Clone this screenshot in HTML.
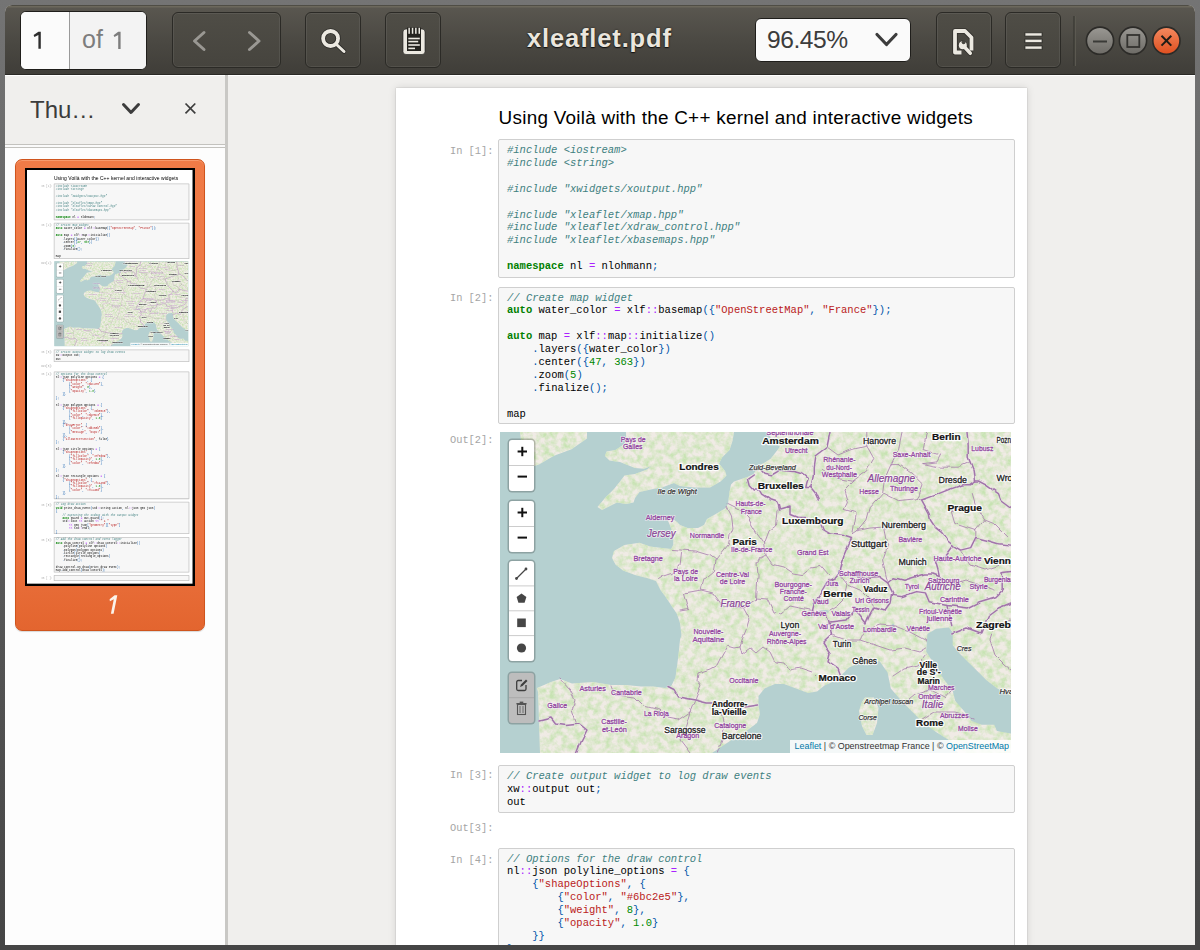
<!DOCTYPE html>
<html><head><meta charset="utf-8"><style>
*{margin:0;padding:0;box-sizing:border-box}
html,body{width:1200px;height:950px;overflow:hidden;background:#5a5a5a;font-family:"Liberation Sans",sans-serif}
.abs{position:absolute}
#desk{position:absolute;left:0;top:0;width:1200px;height:950px;background:linear-gradient(180deg,#747474 0%,#5c5c5c 50%,#454545 100%)}
#win{position:absolute;left:5px;top:5px;width:1190px;height:940px;background:#f0efed;border-radius:7px 7px 0 0;overflow:hidden}
#hdr{position:absolute;left:0;top:0;width:1190px;height:70px;background:linear-gradient(180deg,#5a5750 0%,#4b4943 50%,#3f3d38 100%);border-top:1px solid #4f4d45;box-shadow:inset 0 1.5px 0 #6c685c}
#hdr:after{content:"";position:absolute;left:0;right:0;bottom:0;height:1px;background:#2a2925}
.btn{position:absolute;border:1px solid #2b2a26;border-radius:6px;background:linear-gradient(180deg,#4f4d46,#46443e);box-shadow:inset 0 0 0 1px rgba(255,255,255,0.07)}
.entry{position:absolute;background:#fafafa;border:1px solid #1f1e1b;border-radius:6px}
#side{position:absolute;left:0;top:70px;width:220px;height:870px;background:#f0efed;border-top:1px solid #fff}
#thumbs{position:absolute;left:0;top:143px;width:220px;height:797px;background:#fdfdfd}
#divider{position:absolute;left:220px;top:70px;width:3px;height:870px;background:#c9c8c5}
#content{position:absolute;left:223px;top:70px;width:967px;height:870px;background:#f0efed;border-top:1px solid #fff}
.pg{position:absolute;width:631px;height:1569px;background:#fff}
#page{left:391px;top:83px;box-shadow:0 0 1px rgba(0,0,0,0.3),0 0 8px rgba(0,0,0,0.12)}
#thumb{left:21.75px;top:164.7px;height:1561px;overflow:hidden;transform:scale(0.2623,0.265);transform-origin:0 0}
#thumb .code{border:3.8px solid #c4c4c4}
#thumb use{--po:0.4}
#thumb pre{left:5px;top:1px}
.ttl{left:102.6px;top:19px;font-size:18.9px;letter-spacing:0.262px;color:#000;white-space:nowrap}
.code{position:absolute;left:102px;width:517px;background:#f7f7f7;border:1px solid #cfcfcf;border-radius:2px}
pre{position:absolute;left:8px;top:4px;font-family:"Liberation Mono",monospace;font-size:10.5px;line-height:12.9px;color:#000;white-space:pre}
.prompt{position:absolute;left:54px;font-family:"Liberation Mono",monospace;font-size:10.35px;margin-top:1.5px;color:#a5a5a5;white-space:pre}
.c{color:#408080;font-style:italic}
.k{color:#008000;font-weight:bold}
.o{color:#aa22ff}
.s{color:#ba2121}
.n{color:#008800}
.p{color:#0055aa}
.map{position:absolute;left:104px;top:344px;width:511px;height:321px;overflow:hidden;background:#b5d0d0}
.lbar{position:absolute;left:9.3px;width:25.2px;background:#fff;border-radius:3px;box-shadow:0 0 0 1.5px rgba(0,0,0,0.22)}
.zp,.zm{position:absolute;left:0;width:25px;height:25px;text-align:center;font:bold 16px/25px "Liberation Sans",sans-serif;color:#000}
.zp{top:0}.zm{top:25.5px}
.zsep{position:absolute;left:0;top:25px;width:25px;height:1px;background:#ccc}
.attr{position:absolute;left:290px;top:308.4px;width:221px;height:12.9px;background:rgba(255,255,255,0.85);font-size:8.95px;line-height:12.9px;color:#333;padding-left:4.5px;white-space:nowrap}
</style></head><body>
<svg width="0" height="0" style="position:absolute"><defs>
<filter id="tex" x="0" y="0" width="1" height="1" color-interpolation-filters="sRGB"><feTurbulence type="fractalNoise" baseFrequency="0.16" numOctaves="3" seed="7" result="n"/><feColorMatrix in="n" type="matrix" values="0 0 0 0 0.78  0 0 0 0 0.89  0 0 0 0 0.70  2.2 0 0 0 -0.75" result="g"/><feComposite in="g" in2="SourceGraphic" operator="in" result="gc"/><feMerge><feMergeNode in="SourceGraphic"/><feMergeNode in="gc"/></feMerge></filter>
<filter id="wig" x="-5%" y="-5%" width="110%" height="110%"><feTurbulence type="fractalNoise" baseFrequency="0.1" numOctaves="1" seed="3" result="t"/><feDisplacementMap in="SourceGraphic" in2="t" scale="4.5" xChannelSelector="R" yChannelSelector="G"/></filter>
<clipPath id="mclip"><rect x="0" y="0" width="511" height="321"/></clipPath>
<symbol id="mapsym" viewBox="0 0 511 321">
<g clip-path="url(#mclip)">
<rect x="0" y="0" width="511" height="321" fill="#b5d0d0"/>
<g filter="url(#tex)">
<g fill="#f0ebe5">
<polygon points="266.7,0.0 511.0,0.0 511.0,321.0 40.0,321.0 39.0,288.0 38.0,260.0 37.0,256.0 51.0,250.0 60.0,247.0 72.0,251.5 93.0,250.0 111.0,253.0 126.0,253.0 141.0,254.5 153.0,254.5 165.0,256.0 171.0,254.5 175.5,245.5 178.5,223.0 180.0,208.0 181.5,203.0 180.0,191.0 177.0,182.0 171.0,173.0 165.0,164.0 160.5,158.0 156.0,149.0 147.0,146.0 135.0,143.0 123.0,138.5 115.5,132.5 112.0,126.0 114.0,119.0 124.5,113.0 139.5,110.8 150.0,114.5 162.0,116.0 171.2,117.0 173.3,112.7 173.3,101.8 169.0,91.0 166.9,86.7 173.0,87.0 177.0,90.0 180.0,93.0 187.5,96.0 198.0,96.0 204.0,93.0 207.0,87.0 217.5,81.0 225.0,76.5 228.0,72.0 229.5,60.0 231.0,52.5 234.0,49.5 247.5,45.0 253.5,42.0 259.5,33.0 264.0,31.0 270.7,26.7 280.0,14.7 274.7,10.7"/>
<polygon points="126.0,0.0 234.0,0.0 232.5,9.0 229.5,18.0 222.0,25.5 219.0,31.5 225.0,39.0 226.5,43.5 220.5,49.5 210.0,55.5 195.0,55.5 180.0,54.0 174.0,51.0 162.0,55.5 153.0,57.0 139.5,60.0 135.0,66.0 133.5,70.5 126.0,72.0 117.0,70.5 108.0,75.0 102.0,78.0 97.5,75.0 105.0,66.0 114.0,57.0 120.0,49.5 124.5,43.5 135.0,42.0 147.0,37.5 151.5,34.0 144.0,36.8 135.0,36.0 127.5,33.0 120.0,30.0 109.5,28.5 105.0,24.0 106.5,19.5 115.5,18.0 124.5,12.0 126.0,4.5"/>
<polygon points="20.0,0.0 87.0,0.0 87.0,6.5 71.5,17.3 54.0,23.8 39.0,32.5 34.0,34.0 28.0,28.0 21.0,8.0"/>
</g>
<polygon fill="#f0ebe5" points="365.0,265.5 374.0,265.5 378.5,276.0 377.0,291.0 372.5,303.0 366.5,303.0 362.0,294.0 359.0,279.0 362.0,270.0"/>
</g>
<g fill="#b5d0d0"><polygon points="212.0,321.0 230.0,309.0 245.0,300.0 257.0,291.0 260.0,282.0 258.5,273.0 258.5,264.0 264.5,256.5 275.0,252.0 284.0,252.0 296.0,256.5 308.0,261.0 317.0,259.5 324.5,253.5 336.0,248.5 349.0,235.6 360.0,230.8 379.6,229.2 387.6,240.5 390.8,256.6 400.5,267.8 410.0,277.5 423.0,290.4 436.0,300.0 448.8,308.0 458.0,321.0"/><polygon points="427.4,201.9 436.3,196.8 448.9,195.6 452.7,200.6 452.7,213.3 460.0,222.0 467.8,229.7 476.7,238.5 486.8,248.6 496.9,256.2 511.0,263.8 511.0,301.6 496.9,299.1 494.3,292.8 481.7,292.8 471.6,289.0 464.0,278.9 455.2,268.8 452.7,258.7 443.8,247.3 434.0,232.0 426.2,219.6"/></g>
<g fill="#b5d0d0"><ellipse cx="322" cy="180.5" rx="7" ry="2.2" transform="rotate(-12 322 180.5)"/><ellipse cx="366" cy="147" rx="4" ry="1.6"/><ellipse cx="393" cy="195" rx="1.5" ry="3.5"/></g>
<g filter="url(#tex)">
<polygon fill="#f0ebe5" points="365.0,265.5 374.0,265.5 378.5,276.0 377.0,291.0 372.5,303.0 366.5,303.0 362.0,294.0 359.0,279.0 362.0,270.0"/>
</g>
<g fill="none" stroke-linejoin="round" stroke-linecap="round" filter="url(#wig)">
<polyline points="366.8,0.0 366.8,14.0 373.8,26.4 366.8,38.7 352.7,49.2 344.0,58.0 347.5,70.3 344.0,77.4 356.3,80.9 352.7,102.0" stroke="#a77dae" stroke-width="1.0" stroke-opacity="0.8"/>
<polyline points="384.4,47.5 382.6,61.5 370.3,75.6 366.8,88.0 358.0,98.4 352.7,102.0" stroke="#a77dae" stroke-width="1.0" stroke-opacity="0.8"/>
<polyline points="384.4,61.5 398.4,68.6 416.0,66.8 421.6,67.9" stroke="#a77dae" stroke-width="1.0" stroke-opacity="0.8"/>
<polyline points="398.4,31.6 412.5,42.2 423.0,52.7 419.5,61.5 416.0,66.8" stroke="#a77dae" stroke-width="1.0" stroke-opacity="0.8"/>
<polyline points="423.0,31.6 440.6,35.2 458.2,35.2 470.5,29.9" stroke="#a77dae" stroke-width="1.0" stroke-opacity="0.8"/>
<polyline points="402.0,0.0 398.4,17.6 391.4,31.6 398.4,31.6" stroke="#a77dae" stroke-width="1.0" stroke-opacity="0.8"/>
<polyline points="426.6,0.0 423.0,17.6 440.6,22.9 437.0,29.9 423.0,31.6" stroke="#a77dae" stroke-width="1.0" stroke-opacity="0.8"/>
<polyline points="358.0,98.4 370.0,96.0 384.4,95.0 388.0,112.5 382.6,128.0 387.7,150.8" stroke="#a77dae" stroke-width="1.0" stroke-opacity="0.8"/>
<polyline points="451.2,79.0 475.8,73.8 484.6,87.9 475.8,98.4 454.7,91.4 451.2,79.0" stroke="#a77dae" stroke-width="1.0" stroke-opacity="0.8"/>
<polyline points="472.3,61.5 475.8,73.8" stroke="#a77dae" stroke-width="1.0" stroke-opacity="0.8"/>
<polyline points="475.8,98.4 475.8,109.0" stroke="#a77dae" stroke-width="1.0" stroke-opacity="0.8"/>
<polyline points="484.6,87.9 493.4,91.4 507.4,105.5" stroke="#a77dae" stroke-width="1.0" stroke-opacity="0.8"/>
<polyline points="366.8,14.0 350.0,18.0 338.0,23.0 327.0,15.0" stroke="#a77dae" stroke-width="1.0" stroke-opacity="0.8"/>
<polyline points="352.7,49.2 335.0,46.0 322.5,37.5" stroke="#a77dae" stroke-width="1.0" stroke-opacity="0.8"/>
<polyline points="384.4,47.5 391.4,31.6" stroke="#a77dae" stroke-width="1.0" stroke-opacity="0.8"/>
<polyline points="227.0,75.0 231.5,84.0 233.0,96.0 230.0,103.5 228.5,112.5 216.0,128.0" stroke="#a77dae" stroke-width="1.0" stroke-opacity="0.8"/>
<polyline points="278.0,78.0 276.5,93.0 269.0,99.0 264.5,111.0 266.0,123.0 260.0,126.0 257.0,132.0 258.0,143.0 256.5,167.0" stroke="#a77dae" stroke-width="1.0" stroke-opacity="0.8"/>
<polyline points="266.0,123.0 272.0,132.0 284.0,135.0 293.0,141.0 302.0,142.5 311.0,135.0 320.0,133.5 329.0,144.0" stroke="#a77dae" stroke-width="1.0" stroke-opacity="0.8"/>
<polyline points="172.5,117.5 195.0,119.0 210.0,123.5 216.0,128.0 214.5,138.5 204.0,147.5 201.0,158.0 184.5,161.0 189.0,177.5 180.0,179.0" stroke="#a77dae" stroke-width="1.0" stroke-opacity="0.8"/>
<polyline points="181.5,120.5 180.0,134.0 171.0,141.5 162.0,144.5 157.5,147.5" stroke="#a77dae" stroke-width="1.0" stroke-opacity="0.8"/>
<polyline points="201.0,158.0 213.0,161.0 222.0,173.0 243.0,176.0 256.5,167.0" stroke="#a77dae" stroke-width="1.0" stroke-opacity="0.8"/>
<polyline points="243.0,177.0 249.0,188.0 246.0,198.0 242.0,208.0 240.0,214.0 235.0,215.0 228.0,213.0 220.0,227.0 217.0,233.0 210.0,237.0 198.0,241.0 197.0,248.0 201.0,253.0 195.0,268.0" stroke="#a77dae" stroke-width="1.0" stroke-opacity="0.8"/>
<polyline points="240.0,214.0 242.0,222.0 250.0,216.0 256.0,221.0 263.0,215.0 270.0,220.0 275.0,230.0 285.0,231.0 290.0,238.0 300.0,236.0 312.0,240.0 320.0,248.0" stroke="#a77dae" stroke-width="1.0" stroke-opacity="0.8"/>
<polyline points="256.5,167.0 268.0,168.0 274.0,181.0 281.0,182.0 290.0,174.0 300.0,176.0 312.5,178.5" stroke="#a77dae" stroke-width="1.0" stroke-opacity="0.8"/>
<polyline points="228.0,72.0 240.0,78.0 248.0,86.0 255.0,98.0 264.5,111.0" stroke="#a77dae" stroke-width="1.0" stroke-opacity="0.8"/>
<polyline points="60.0,247.0 70.0,258.0 75.0,268.0 72.0,278.0 76.0,290.0" stroke="#a77dae" stroke-width="1.0" stroke-opacity="0.8"/>
<polyline points="111.0,253.0 115.0,263.0 135.0,265.0 144.0,274.0 160.0,278.0 168.0,286.0 178.0,288.0 190.0,280.0 195.0,268.0" stroke="#a77dae" stroke-width="1.0" stroke-opacity="0.8"/>
<polyline points="190.0,280.0 186.0,293.0 180.0,308.0 190.0,321.0" stroke="#a77dae" stroke-width="1.0" stroke-opacity="0.8"/>
<polyline points="220.0,273.0 225.0,293.0 222.0,308.0 217.0,321.0" stroke="#a77dae" stroke-width="1.0" stroke-opacity="0.8"/>
<polyline points="339.0,141.5 348.0,153.0 345.0,166.0 338.0,173.0 330.0,178.0" stroke="#a77dae" stroke-width="1.0" stroke-opacity="0.8"/>
<polyline points="348.0,153.0 360.0,158.0 368.0,166.0 374.0,175.0" stroke="#a77dae" stroke-width="1.0" stroke-opacity="0.8"/>
<polyline points="393.0,244.0 405.0,236.0 418.0,233.0 426.0,223.0" stroke="#a77dae" stroke-width="1.0" stroke-opacity="0.8"/>
<polyline points="404.2,272.0 415.0,263.0 430.0,258.0 445.0,266.0 451.8,258.0" stroke="#a77dae" stroke-width="1.0" stroke-opacity="0.8"/>
<polyline points="421.0,288.8 435.0,280.0 455.0,280.0 474.2,286.0" stroke="#a77dae" stroke-width="1.0" stroke-opacity="0.8"/>
<polyline points="360.0,208.0 375.0,213.0 390.0,218.0 405.0,216.0 420.0,220.0 426.6,216.0" stroke="#a77dae" stroke-width="1.0" stroke-opacity="0.8"/>
<polyline points="331.5,203.0 345.0,208.0 360.0,208.0 365.0,198.0 380.0,193.0 395.0,194.0 410.0,200.0 426.6,209.0" stroke="#a77dae" stroke-width="1.0" stroke-opacity="0.8"/>
<polyline points="511.0,188.0 495.0,193.0 490.0,208.0 495.0,223.0 505.0,233.0 511.0,238.0" stroke="#a77dae" stroke-width="1.0" stroke-opacity="0.8"/>
<polyline points="460.0,118.0 470.0,133.0 485.0,138.0 500.0,133.0" stroke="#a77dae" stroke-width="1.0" stroke-opacity="0.8"/>
<polyline points="439.3,144.5 450.0,153.0 465.0,148.0 480.0,153.0 495.0,158.0" stroke="#a77dae" stroke-width="1.0" stroke-opacity="0.8"/>
<polyline points="253.3,43.0 247.5,47.2 249.2,53.8 253.3,58.0 259.2,58.0 261.7,62.2 269.2,67.2 276.7,69.7 278.3,73.0 279.5,78.0 290.0,75.0 290.0,82.5 297.5,85.5 308.0,85.5 320.0,90.0 323.0,97.5 330.5,102.0 342.5,103.5 351.5,106.5 348.5,112.5 344.0,123.0 341.0,132.0 338.8,141.0 335.0,145.5 329.0,148.5 324.5,156.0 320.0,163.5 314.0,172.5 312.5,178.5 315.5,183.0 321.0,180.0 325.5,182.0 328.5,188.0 330.0,194.0 331.5,203.0 323.0,211.0 330.0,222.0 328.0,230.0 338.0,237.0 342.0,248.0" stroke="#e6dbe6" stroke-width="2.6" stroke-opacity="0.6"/>
<polyline points="168.0,254.5 174.0,257.5 178.5,265.0 186.0,266.5 195.0,268.0 207.0,271.0 216.0,271.0 230.0,273.0 245.0,275.0 258.5,273.0" stroke="#e6dbe6" stroke-width="2.6" stroke-opacity="0.6"/>
<polyline points="39.0,289.0 51.0,286.0 55.5,292.0 66.0,293.5 79.5,292.0 87.0,298.0 81.0,310.0 76.5,321.0" stroke="#e6dbe6" stroke-width="2.6" stroke-opacity="0.6"/>
<polyline points="330.0,0.0 327.0,15.0 315.0,24.0 313.3,35.5 313.3,43.8 310.8,55.5" stroke="#e6dbe6" stroke-width="2.6" stroke-opacity="0.6"/>
<polyline points="261.7,38.8 264.0,41.3 271.7,43.0 277.5,39.7 279.0,38.0 295.0,39.7 303.3,42.2 308.3,46.3 306.7,51.3 305.8,55.5 310.8,55.5 315.0,60.5 318.3,68.0" stroke="#e6dbe6" stroke-width="2.6" stroke-opacity="0.6"/>
<polyline points="467.0,0.0 468.2,12.6 468.2,25.2 473.2,37.7 474.5,49.0 478.3,49.0 485.8,52.8 498.4,61.6 500.9,68.0 511.0,75.5" stroke="#e6dbe6" stroke-width="2.6" stroke-opacity="0.6"/>
<polyline points="474.5,49.0 469.4,52.8 463.0,52.8 448.0,57.9 435.5,62.9 421.6,67.9 429.2,81.8 430.4,88.0 435.5,95.6 441.8,100.6 448.0,109.3 454.4,114.4 460.6,118.1 470.7,115.6 475.7,105.5 485.8,108.0 498.4,111.8 511.0,113.1" stroke="#e6dbe6" stroke-width="2.6" stroke-opacity="0.6"/>
<polyline points="453.0,113.0 445.5,123.2 435.5,129.5 438.0,138.3 439.3,144.5 433.0,142.0 425.4,142.0 416.6,144.5 404.0,148.3 394.0,145.8 387.7,150.8 378.9,144.5 365.0,145.5 351.5,144.0 338.8,141.0" stroke="#e6dbe6" stroke-width="2.6" stroke-opacity="0.6"/>
<polyline points="387.7,150.8 392.7,160.9 391.5,163.4 401.5,164.7 416.6,159.6 425.4,160.9 429.2,169.7 448.0,173.5 467.0,176.0 479.5,169.7 495.9,164.7 502.2,158.4 502.2,148.3 501.0,140.8 511.0,139.5" stroke="#e6dbe6" stroke-width="2.6" stroke-opacity="0.6"/>
<polyline points="391.5,163.4 390.0,171.0 385.0,178.0 374.0,175.0 370.0,182.0 366.0,192.0 360.0,184.0 354.0,178.0 346.0,188.0 330.0,190.0" stroke="#e6dbe6" stroke-width="2.6" stroke-opacity="0.6"/>
<polyline points="448.0,173.5 450.6,188.6 451.8,193.6" stroke="#e6dbe6" stroke-width="2.6" stroke-opacity="0.6"/>
<polyline points="451.8,202.0 467.0,196.0 480.8,201.0 488.3,183.5 498.4,176.0 511.0,171.0" stroke="#e6dbe6" stroke-width="2.6" stroke-opacity="0.6"/>
<polyline points="253.3,43.0 247.5,47.2 249.2,53.8 253.3,58.0 259.2,58.0 261.7,62.2 269.2,67.2 276.7,69.7 278.3,73.0 279.5,78.0 290.0,75.0 290.0,82.5 297.5,85.5 308.0,85.5 320.0,90.0 323.0,97.5 330.5,102.0 342.5,103.5 351.5,106.5 348.5,112.5 344.0,123.0 341.0,132.0 338.8,141.0 335.0,145.5 329.0,148.5 324.5,156.0 320.0,163.5 314.0,172.5 312.5,178.5 315.5,183.0 321.0,180.0 325.5,182.0 328.5,188.0 330.0,194.0 331.5,203.0 323.0,211.0 330.0,222.0 328.0,230.0 338.0,237.0 342.0,248.0" stroke="#a174aa" stroke-width="1.45"/>
<polyline points="168.0,254.5 174.0,257.5 178.5,265.0 186.0,266.5 195.0,268.0 207.0,271.0 216.0,271.0 230.0,273.0 245.0,275.0 258.5,273.0" stroke="#a174aa" stroke-width="1.45"/>
<polyline points="39.0,289.0 51.0,286.0 55.5,292.0 66.0,293.5 79.5,292.0 87.0,298.0 81.0,310.0 76.5,321.0" stroke="#a174aa" stroke-width="1.45"/>
<polyline points="330.0,0.0 327.0,15.0 315.0,24.0 313.3,35.5 313.3,43.8 310.8,55.5" stroke="#a174aa" stroke-width="1.45"/>
<polyline points="261.7,38.8 264.0,41.3 271.7,43.0 277.5,39.7 279.0,38.0 295.0,39.7 303.3,42.2 308.3,46.3 306.7,51.3 305.8,55.5 310.8,55.5 315.0,60.5 318.3,68.0" stroke="#a174aa" stroke-width="1.45"/>
<polyline points="467.0,0.0 468.2,12.6 468.2,25.2 473.2,37.7 474.5,49.0 478.3,49.0 485.8,52.8 498.4,61.6 500.9,68.0 511.0,75.5" stroke="#a174aa" stroke-width="1.45"/>
<polyline points="474.5,49.0 469.4,52.8 463.0,52.8 448.0,57.9 435.5,62.9 421.6,67.9 429.2,81.8 430.4,88.0 435.5,95.6 441.8,100.6 448.0,109.3 454.4,114.4 460.6,118.1 470.7,115.6 475.7,105.5 485.8,108.0 498.4,111.8 511.0,113.1" stroke="#a174aa" stroke-width="1.45"/>
<polyline points="453.0,113.0 445.5,123.2 435.5,129.5 438.0,138.3 439.3,144.5 433.0,142.0 425.4,142.0 416.6,144.5 404.0,148.3 394.0,145.8 387.7,150.8 378.9,144.5 365.0,145.5 351.5,144.0 338.8,141.0" stroke="#a174aa" stroke-width="1.45"/>
<polyline points="387.7,150.8 392.7,160.9 391.5,163.4 401.5,164.7 416.6,159.6 425.4,160.9 429.2,169.7 448.0,173.5 467.0,176.0 479.5,169.7 495.9,164.7 502.2,158.4 502.2,148.3 501.0,140.8 511.0,139.5" stroke="#a174aa" stroke-width="1.45"/>
<polyline points="391.5,163.4 390.0,171.0 385.0,178.0 374.0,175.0 370.0,182.0 366.0,192.0 360.0,184.0 354.0,178.0 346.0,188.0 330.0,190.0" stroke="#a174aa" stroke-width="1.45"/>
<polyline points="448.0,173.5 450.6,188.6 451.8,193.6" stroke="#a174aa" stroke-width="1.45"/>
<polyline points="451.8,202.0 467.0,196.0 480.8,201.0 488.3,183.5 498.4,176.0 511.0,171.0" stroke="#a174aa" stroke-width="1.45"/>
</g>
<g font-family="Liberation Sans" stroke-linejoin="round">
<text x="266.3" y="3.3" textLength="47.2" lengthAdjust="spacingAndGlyphs" font-size="7.8"  fill="#fff" stroke="#fff" stroke-width="1.8" stroke-opacity="0.7" fill-opacity="0.7" style="opacity:var(--po,1)">Septentrionale</text>
<text x="120.8" y="10.2" textLength="24.7" lengthAdjust="spacingAndGlyphs" font-size="7.8"  fill="#fff" stroke="#fff" stroke-width="1.8" stroke-opacity="0.7" fill-opacity="0.7" style="opacity:var(--po,1)">Pays de</text>
<text x="123.0" y="16.8" textLength="19.5" lengthAdjust="spacingAndGlyphs" font-size="7.8"  fill="#fff" stroke="#fff" stroke-width="1.8" stroke-opacity="0.7" fill-opacity="0.7" style="opacity:var(--po,1)">Galles</text>
<text x="262.2" y="12.0" textLength="56.6" lengthAdjust="spacingAndGlyphs" font-size="9.0" font-weight="bold" fill="#fff" stroke="#fff" stroke-width="2.4" stroke-opacity="0.95" fill-opacity="0.95">Amsterdam</text>
<text x="363.0" y="11.7" textLength="33.0" lengthAdjust="spacingAndGlyphs" font-size="9.0"  fill="#fff" stroke="#fff" stroke-width="2.4" stroke-opacity="0.95" fill-opacity="0.95">Hanovre</text>
<text x="432.0" y="7.8" textLength="28.6" lengthAdjust="spacingAndGlyphs" font-size="9.0" font-weight="bold" fill="#fff" stroke="#fff" stroke-width="2.4" stroke-opacity="0.95" fill-opacity="0.95">Berlin</text>
<text x="496.5" y="10.7" textLength="21.5" lengthAdjust="spacingAndGlyphs" font-size="9.0"  fill="#fff" stroke="#fff" stroke-width="2.4" stroke-opacity="0.95" fill-opacity="0.95">Poznań</text>
<text x="285.0" y="21.0" textLength="22.5" lengthAdjust="spacingAndGlyphs" font-size="7.8"  fill="#fff" stroke="#fff" stroke-width="1.8" stroke-opacity="0.7" fill-opacity="0.7" style="opacity:var(--po,1)">Utrecht</text>
<text x="392.7" y="24.5" textLength="37.7" lengthAdjust="spacingAndGlyphs" font-size="7.8"  fill="#fff" stroke="#fff" stroke-width="1.8" stroke-opacity="0.7" fill-opacity="0.7" style="opacity:var(--po,1)">Saxe-Anhalt</text>
<text x="471.3" y="18.9" textLength="22.0" lengthAdjust="spacingAndGlyphs" font-size="7.8"  fill="#fff" stroke="#fff" stroke-width="1.8" stroke-opacity="0.7" fill-opacity="0.7" style="opacity:var(--po,1)">Lubusz</text>
<text x="323.3" y="30.0" textLength="32.2" lengthAdjust="spacingAndGlyphs" font-size="7.8"  fill="#fff" stroke="#fff" stroke-width="1.8" stroke-opacity="0.7" fill-opacity="0.7" style="opacity:var(--po,1)">Rhénanie-</text>
<text x="326.3" y="37.5" textLength="25.5" lengthAdjust="spacingAndGlyphs" font-size="7.8"  fill="#fff" stroke="#fff" stroke-width="1.8" stroke-opacity="0.7" fill-opacity="0.7" style="opacity:var(--po,1)">du-Nord-</text>
<text x="321.8" y="45.0" textLength="35.2" lengthAdjust="spacingAndGlyphs" font-size="7.8"  fill="#fff" stroke="#fff" stroke-width="1.8" stroke-opacity="0.7" fill-opacity="0.7" style="opacity:var(--po,1)">Westphalie</text>
<text x="179.3" y="37.5" textLength="39.4" lengthAdjust="spacingAndGlyphs" font-size="9.0" font-weight="bold" fill="#fff" stroke="#fff" stroke-width="2.4" stroke-opacity="0.95" fill-opacity="0.95">Londres</text>
<text x="249.0" y="37.5" textLength="46.8" lengthAdjust="spacingAndGlyphs" font-size="8.0" font-style="italic" fill="#fff" stroke="#fff" stroke-width="1.8" stroke-opacity="0.7" fill-opacity="0.7">Zuid-Beveland</text>
<text x="367.5" y="49.5" textLength="47.7" lengthAdjust="spacingAndGlyphs" font-size="10.0" font-style="italic" fill="#fff" stroke="#fff" stroke-width="1.8" stroke-opacity="0.7" fill-opacity="0.7" style="opacity:var(--po,1)">Allemagne</text>
<text x="438.6" y="51.0" textLength="28.3" lengthAdjust="spacingAndGlyphs" font-size="9.0"  fill="#fff" stroke="#fff" stroke-width="2.4" stroke-opacity="0.95" fill-opacity="0.95">Dresde</text>
<text x="496.5" y="49.0" textLength="33.5" lengthAdjust="spacingAndGlyphs" font-size="9.0"  fill="#fff" stroke="#fff" stroke-width="2.4" stroke-opacity="0.95" fill-opacity="0.95">Wrocław</text>
<text x="157.5" y="61.5" textLength="39.3" lengthAdjust="spacingAndGlyphs" font-size="8.0" font-style="italic" fill="#fff" stroke="#fff" stroke-width="1.8" stroke-opacity="0.7" fill-opacity="0.7">Ile de Wight</text>
<text x="257.7" y="57.0" textLength="46.1" lengthAdjust="spacingAndGlyphs" font-size="9.0" font-weight="bold" fill="#fff" stroke="#fff" stroke-width="2.4" stroke-opacity="0.95" fill-opacity="0.95">Bruxelles</text>
<text x="359.3" y="62.3" textLength="19.5" lengthAdjust="spacingAndGlyphs" font-size="7.8"  fill="#fff" stroke="#fff" stroke-width="1.8" stroke-opacity="0.7" fill-opacity="0.7" style="opacity:var(--po,1)">Hesse</text>
<text x="390.0" y="59.3" textLength="27.8" lengthAdjust="spacingAndGlyphs" font-size="7.8"  fill="#fff" stroke="#fff" stroke-width="1.8" stroke-opacity="0.7" fill-opacity="0.7" style="opacity:var(--po,1)">Thuringe</text>
<text x="235.5" y="74.3" textLength="30.0" lengthAdjust="spacingAndGlyphs" font-size="7.8"  fill="#fff" stroke="#fff" stroke-width="1.8" stroke-opacity="0.7" fill-opacity="0.7" style="opacity:var(--po,1)">Hauts-de-</text>
<text x="240.8" y="81.8" textLength="21.0" lengthAdjust="spacingAndGlyphs" font-size="7.8"  fill="#fff" stroke="#fff" stroke-width="1.8" stroke-opacity="0.7" fill-opacity="0.7" style="opacity:var(--po,1)">France</text>
<text x="447.4" y="78.6" textLength="34.6" lengthAdjust="spacingAndGlyphs" font-size="9.0" font-weight="bold" fill="#fff" stroke="#fff" stroke-width="2.4" stroke-opacity="0.95" fill-opacity="0.95">Prague</text>
<text x="145.8" y="87.8" textLength="28.5" lengthAdjust="spacingAndGlyphs" font-size="7.8"  fill="#fff" stroke="#fff" stroke-width="1.8" stroke-opacity="0.7" fill-opacity="0.7" style="opacity:var(--po,1)">Alderney</text>
<text x="282.0" y="92.3" textLength="61.5" lengthAdjust="spacingAndGlyphs" font-size="9.0" font-weight="bold" fill="#fff" stroke="#fff" stroke-width="2.4" stroke-opacity="0.95" fill-opacity="0.95">Luxembourg</text>
<text x="381.4" y="95.6" textLength="44.6" lengthAdjust="spacingAndGlyphs" font-size="9.0"  fill="#fff" stroke="#fff" stroke-width="2.4" stroke-opacity="0.95" fill-opacity="0.95">Nuremberg</text>
<text x="147.0" y="104.5" textLength="28.5" lengthAdjust="spacingAndGlyphs" font-size="10.0" font-style="italic" fill="#fff" stroke="#fff" stroke-width="1.8" stroke-opacity="0.7" fill-opacity="0.7" style="opacity:var(--po,1)">Jersey</text>
<text x="189.8" y="106.3" textLength="34.5" lengthAdjust="spacingAndGlyphs" font-size="7.8"  fill="#fff" stroke="#fff" stroke-width="1.8" stroke-opacity="0.7" fill-opacity="0.7" style="opacity:var(--po,1)">Normandie</text>
<text x="232.5" y="113.0" textLength="24.3" lengthAdjust="spacingAndGlyphs" font-size="9.0" font-weight="bold" fill="#fff" stroke="#fff" stroke-width="2.4" stroke-opacity="0.95" fill-opacity="0.95">Paris</text>
<text x="231.0" y="119.8" textLength="41.3" lengthAdjust="spacingAndGlyphs" font-size="7.8"  fill="#fff" stroke="#fff" stroke-width="1.8" stroke-opacity="0.7" fill-opacity="0.7" style="opacity:var(--po,1)">Ile-de-France</text>
<text x="351.0" y="115.2" textLength="36.0" lengthAdjust="spacingAndGlyphs" font-size="9.0"  fill="#fff" stroke="#fff" stroke-width="2.4" stroke-opacity="0.95" fill-opacity="0.95">Stuttgart</text>
<text x="398.4" y="110.0" textLength="23.9" lengthAdjust="spacingAndGlyphs" font-size="7.8"  fill="#fff" stroke="#fff" stroke-width="1.8" stroke-opacity="0.7" fill-opacity="0.7" style="opacity:var(--po,1)">Bavière</text>
<text x="133.5" y="128.8" textLength="29.3" lengthAdjust="spacingAndGlyphs" font-size="7.8"  fill="#fff" stroke="#fff" stroke-width="1.8" stroke-opacity="0.7" fill-opacity="0.7" style="opacity:var(--po,1)">Bretagne</text>
<text x="297.0" y="122.8" textLength="31.5" lengthAdjust="spacingAndGlyphs" font-size="7.8"  fill="#fff" stroke="#fff" stroke-width="1.8" stroke-opacity="0.7" fill-opacity="0.7" style="opacity:var(--po,1)">Grand Est</text>
<text x="398.4" y="132.6" textLength="28.3" lengthAdjust="spacingAndGlyphs" font-size="9.0"  fill="#fff" stroke="#fff" stroke-width="2.4" stroke-opacity="0.95" fill-opacity="0.95">Munich</text>
<text x="433.6" y="128.8" textLength="47.8" lengthAdjust="spacingAndGlyphs" font-size="7.8"  fill="#fff" stroke="#fff" stroke-width="1.8" stroke-opacity="0.7" fill-opacity="0.7" style="opacity:var(--po,1)">Haute-Autriche</text>
<text x="483.9" y="131.7" textLength="32.5" lengthAdjust="spacingAndGlyphs" font-size="9.0" font-weight="bold" fill="#fff" stroke="#fff" stroke-width="2.4" stroke-opacity="0.95" fill-opacity="0.95">Vienne</text>
<text x="173.3" y="141.5" textLength="24.7" lengthAdjust="spacingAndGlyphs" font-size="7.8"  fill="#fff" stroke="#fff" stroke-width="1.8" stroke-opacity="0.7" fill-opacity="0.7" style="opacity:var(--po,1)">Pays de</text>
<text x="174.0" y="149.0" textLength="23.7" lengthAdjust="spacingAndGlyphs" font-size="7.8"  fill="#fff" stroke="#fff" stroke-width="1.8" stroke-opacity="0.7" fill-opacity="0.7" style="opacity:var(--po,1)">la Loire</text>
<text x="216.0" y="144.5" textLength="33.0" lengthAdjust="spacingAndGlyphs" font-size="7.8"  fill="#fff" stroke="#fff" stroke-width="1.8" stroke-opacity="0.7" fill-opacity="0.7" style="opacity:var(--po,1)">Centre-Val</text>
<text x="219.8" y="152.0" textLength="25.5" lengthAdjust="spacingAndGlyphs" font-size="7.8"  fill="#fff" stroke="#fff" stroke-width="1.8" stroke-opacity="0.7" fill-opacity="0.7" style="opacity:var(--po,1)">de Loire</text>
<text x="339.0" y="143.8" textLength="39.2" lengthAdjust="spacingAndGlyphs" font-size="7.8"  fill="#fff" stroke="#fff" stroke-width="1.8" stroke-opacity="0.7" fill-opacity="0.7" style="opacity:var(--po,1)">Schaffhouse</text>
<text x="349.5" y="150.8" textLength="19.9" lengthAdjust="spacingAndGlyphs" font-size="7.8"  fill="#fff" stroke="#fff" stroke-width="1.8" stroke-opacity="0.7" fill-opacity="0.7" style="opacity:var(--po,1)">Zurich</text>
<text x="428.0" y="150.8" textLength="31.4" lengthAdjust="spacingAndGlyphs" font-size="7.8"  fill="#fff" stroke="#fff" stroke-width="1.8" stroke-opacity="0.7" fill-opacity="0.7" style="opacity:var(--po,1)">Salzbourg</text>
<text x="483.9" y="150.2" textLength="34.1" lengthAdjust="spacingAndGlyphs" font-size="7.8"  fill="#fff" stroke="#fff" stroke-width="1.8" stroke-opacity="0.7" fill-opacity="0.7" style="opacity:var(--po,1)">Burgenland</text>
<text x="274.5" y="154.7" textLength="37.5" lengthAdjust="spacingAndGlyphs" font-size="7.8"  fill="#fff" stroke="#fff" stroke-width="1.8" stroke-opacity="0.7" fill-opacity="0.7" style="opacity:var(--po,1)">Bourgogne-</text>
<text x="326.3" y="153.5" textLength="12.0" lengthAdjust="spacingAndGlyphs" font-size="7.8"  fill="#fff" stroke="#fff" stroke-width="1.8" stroke-opacity="0.7" fill-opacity="0.7" style="opacity:var(--po,1)">Jura</text>
<text x="363.5" y="159.6" textLength="23.9" lengthAdjust="spacingAndGlyphs" font-size="9.0" font-weight="bold" fill="#fff" stroke="#fff" stroke-width="2.4" stroke-opacity="0.95" fill-opacity="0.95">Vaduz</text>
<text x="404.7" y="157.1" textLength="14.4" lengthAdjust="spacingAndGlyphs" font-size="7.8"  fill="#fff" stroke="#fff" stroke-width="1.8" stroke-opacity="0.7" fill-opacity="0.7" style="opacity:var(--po,1)">Tyrol</text>
<text x="424.8" y="158.1" textLength="35.8" lengthAdjust="spacingAndGlyphs" font-size="10.0" font-style="italic" fill="#fff" stroke="#fff" stroke-width="1.8" stroke-opacity="0.7" fill-opacity="0.7" style="opacity:var(--po,1)">Autriche</text>
<text x="469.4" y="156.5" textLength="18.3" lengthAdjust="spacingAndGlyphs" font-size="7.8"  fill="#fff" stroke="#fff" stroke-width="1.8" stroke-opacity="0.7" fill-opacity="0.7" style="opacity:var(--po,1)">Styrie</text>
<text x="279.8" y="161.8" textLength="27.0" lengthAdjust="spacingAndGlyphs" font-size="7.8"  fill="#fff" stroke="#fff" stroke-width="1.8" stroke-opacity="0.7" fill-opacity="0.7" style="opacity:var(--po,1)">Franche-</text>
<text x="323.3" y="164.8" textLength="29.2" lengthAdjust="spacingAndGlyphs" font-size="9.0" font-weight="bold" fill="#fff" stroke="#fff" stroke-width="2.4" stroke-opacity="0.95" fill-opacity="0.95">Berne</text>
<text x="283.5" y="169.3" textLength="20.3" lengthAdjust="spacingAndGlyphs" font-size="7.8"  fill="#fff" stroke="#fff" stroke-width="1.8" stroke-opacity="0.7" fill-opacity="0.7" style="opacity:var(--po,1)">Comté</text>
<text x="312.8" y="172.3" textLength="15.7" lengthAdjust="spacingAndGlyphs" font-size="7.8"  fill="#fff" stroke="#fff" stroke-width="1.8" stroke-opacity="0.7" fill-opacity="0.7" style="opacity:var(--po,1)">Vaud</text>
<text x="355.0" y="171.0" textLength="9.0" lengthAdjust="spacingAndGlyphs" font-size="7.8"  fill="#fff" stroke="#fff" stroke-width="1.8" stroke-opacity="0.7" fill-opacity="0.7" style="opacity:var(--po,1)">Uri</text>
<text x="365.7" y="171.0" textLength="23.2" lengthAdjust="spacingAndGlyphs" font-size="7.8"  fill="#fff" stroke="#fff" stroke-width="1.8" stroke-opacity="0.7" fill-opacity="0.7" style="opacity:var(--po,1)">Grisons</text>
<text x="439.9" y="169.7" textLength="28.9" lengthAdjust="spacingAndGlyphs" font-size="7.8"  fill="#fff" stroke="#fff" stroke-width="1.8" stroke-opacity="0.7" fill-opacity="0.7" style="opacity:var(--po,1)">Carinthie</text>
<text x="220.5" y="174.5" textLength="30.0" lengthAdjust="spacingAndGlyphs" font-size="10.0" font-style="italic" fill="#fff" stroke="#fff" stroke-width="1.8" stroke-opacity="0.7" fill-opacity="0.7" style="opacity:var(--po,1)">France</text>
<text x="301.5" y="183.5" textLength="24.8" lengthAdjust="spacingAndGlyphs" font-size="7.8"  fill="#fff" stroke="#fff" stroke-width="1.8" stroke-opacity="0.7" fill-opacity="0.7" style="opacity:var(--po,1)">Genève</text>
<text x="331.5" y="183.5" textLength="18.8" lengthAdjust="spacingAndGlyphs" font-size="7.8"  fill="#fff" stroke="#fff" stroke-width="1.8" stroke-opacity="0.7" fill-opacity="0.7" style="opacity:var(--po,1)">Valais</text>
<text x="352.0" y="179.8" textLength="17.4" lengthAdjust="spacingAndGlyphs" font-size="7.8"  fill="#fff" stroke="#fff" stroke-width="1.8" stroke-opacity="0.7" fill-opacity="0.7" style="opacity:var(--po,1)">Tessin</text>
<text x="419.1" y="181.7" textLength="42.8" lengthAdjust="spacingAndGlyphs" font-size="7.8"  fill="#fff" stroke="#fff" stroke-width="1.8" stroke-opacity="0.7" fill-opacity="0.7" style="opacity:var(--po,1)">Frioul-Vénétie</text>
<text x="426.7" y="189.2" textLength="25.8" lengthAdjust="spacingAndGlyphs" font-size="7.8"  fill="#fff" stroke="#fff" stroke-width="1.8" stroke-opacity="0.7" fill-opacity="0.7" style="opacity:var(--po,1)">julienne</text>
<text x="476.0" y="195.6" textLength="35.0" lengthAdjust="spacingAndGlyphs" font-size="9.0" font-weight="bold" fill="#fff" stroke="#fff" stroke-width="2.4" stroke-opacity="0.95" fill-opacity="0.95">Zagreb</text>
<text x="280.5" y="196.3" textLength="18.8" lengthAdjust="spacingAndGlyphs" font-size="9.0"  fill="#fff" stroke="#fff" stroke-width="2.4" stroke-opacity="0.95" fill-opacity="0.95">Lyon</text>
<text x="318.0" y="197.0" textLength="36.0" lengthAdjust="spacingAndGlyphs" font-size="7.8"  fill="#fff" stroke="#fff" stroke-width="1.8" stroke-opacity="0.7" fill-opacity="0.7" style="opacity:var(--po,1)">Val d'Aoste</text>
<text x="363.0" y="199.9" textLength="33.5" lengthAdjust="spacingAndGlyphs" font-size="7.8"  fill="#fff" stroke="#fff" stroke-width="1.8" stroke-opacity="0.7" fill-opacity="0.7" style="opacity:var(--po,1)">Lombardie</text>
<text x="406.4" y="198.8" textLength="23.6" lengthAdjust="spacingAndGlyphs" font-size="7.8"  fill="#fff" stroke="#fff" stroke-width="1.8" stroke-opacity="0.7" fill-opacity="0.7" style="opacity:var(--po,1)">Vénétie</text>
<text x="193.4" y="202.0" textLength="29.9" lengthAdjust="spacingAndGlyphs" font-size="7.8"  fill="#fff" stroke="#fff" stroke-width="1.8" stroke-opacity="0.7" fill-opacity="0.7" style="opacity:var(--po,1)">Nouvelle-</text>
<text x="192.5" y="209.7" textLength="31.7" lengthAdjust="spacingAndGlyphs" font-size="7.8"  fill="#fff" stroke="#fff" stroke-width="1.8" stroke-opacity="0.7" fill-opacity="0.7" style="opacity:var(--po,1)">Aquitaine</text>
<text x="269.0" y="203.5" textLength="32.0" lengthAdjust="spacingAndGlyphs" font-size="7.8"  fill="#fff" stroke="#fff" stroke-width="1.8" stroke-opacity="0.7" fill-opacity="0.7" style="opacity:var(--po,1)">Auvergne-</text>
<text x="266.8" y="211.8" textLength="39.7" lengthAdjust="spacingAndGlyphs" font-size="7.8"  fill="#fff" stroke="#fff" stroke-width="1.8" stroke-opacity="0.7" fill-opacity="0.7" style="opacity:var(--po,1)">Rhône-Alpes</text>
<text x="332.8" y="215.3" textLength="18.4" lengthAdjust="spacingAndGlyphs" font-size="9.0"  fill="#fff" stroke="#fff" stroke-width="2.4" stroke-opacity="0.95" fill-opacity="0.95">Turin</text>
<text x="456.7" y="219.0" textLength="14.7" lengthAdjust="spacingAndGlyphs" font-size="8.0" font-style="italic" fill="#fff" stroke="#fff" stroke-width="1.8" stroke-opacity="0.7" fill-opacity="0.7">Cres</text>
<text x="352.3" y="231.6" textLength="24.7" lengthAdjust="spacingAndGlyphs" font-size="9.0"  fill="#fff" stroke="#fff" stroke-width="2.4" stroke-opacity="0.95" fill-opacity="0.95">Gênes</text>
<text x="419.6" y="235.6" textLength="17.5" lengthAdjust="spacingAndGlyphs" font-size="9.0" font-weight="bold" fill="#fff" stroke="#fff" stroke-width="2.4" stroke-opacity="0.95" fill-opacity="0.95">Ville</text>
<text x="416.8" y="243.3" textLength="23.8" lengthAdjust="spacingAndGlyphs" font-size="9.0" font-weight="bold" fill="#fff" stroke="#fff" stroke-width="2.4" stroke-opacity="0.95" fill-opacity="0.95">de S'-</text>
<text x="417.5" y="251.7" textLength="22.4" lengthAdjust="spacingAndGlyphs" font-size="9.0" font-weight="bold" fill="#fff" stroke="#fff" stroke-width="2.4" stroke-opacity="0.95" fill-opacity="0.95">Marin</text>
<text x="229.3" y="250.5" textLength="29.2" lengthAdjust="spacingAndGlyphs" font-size="7.8"  fill="#fff" stroke="#fff" stroke-width="1.8" stroke-opacity="0.7" fill-opacity="0.7" style="opacity:var(--po,1)">Occitanie</text>
<text x="318.5" y="248.7" textLength="37.5" lengthAdjust="spacingAndGlyphs" font-size="9.0" font-weight="bold" fill="#fff" stroke="#fff" stroke-width="2.4" stroke-opacity="0.95" fill-opacity="0.95">Monaco</text>
<text x="428.0" y="258.0" textLength="26.6" lengthAdjust="spacingAndGlyphs" font-size="7.8"  fill="#fff" stroke="#fff" stroke-width="1.8" stroke-opacity="0.7" fill-opacity="0.7" style="opacity:var(--po,1)">Marches</text>
<text x="499.4" y="262.2" textLength="16.6" lengthAdjust="spacingAndGlyphs" font-size="8.0" font-style="italic" fill="#fff" stroke="#fff" stroke-width="1.8" stroke-opacity="0.7" fill-opacity="0.7">Hvar</text>
<text x="79.5" y="259.0" textLength="26.3" lengthAdjust="spacingAndGlyphs" font-size="7.8"  fill="#fff" stroke="#fff" stroke-width="1.8" stroke-opacity="0.7" fill-opacity="0.7" style="opacity:var(--po,1)">Asturies</text>
<text x="111.0" y="262.8" textLength="30.8" lengthAdjust="spacingAndGlyphs" font-size="7.8"  fill="#fff" stroke="#fff" stroke-width="1.8" stroke-opacity="0.7" fill-opacity="0.7" style="opacity:var(--po,1)">Cantabrie</text>
<text x="418.2" y="267.1" textLength="22.4" lengthAdjust="spacingAndGlyphs" font-size="7.8"  fill="#fff" stroke="#fff" stroke-width="1.8" stroke-opacity="0.7" fill-opacity="0.7" style="opacity:var(--po,1)">Ombrie</text>
<text x="364.3" y="272.0" textLength="49.0" lengthAdjust="spacingAndGlyphs" font-size="8.0" font-style="italic" fill="#fff" stroke="#fff" stroke-width="1.8" stroke-opacity="0.7" fill-opacity="0.7">Archipel toscan</text>
<text x="421.7" y="275.5" textLength="21.7" lengthAdjust="spacingAndGlyphs" font-size="10.0" font-style="italic" fill="#fff" stroke="#fff" stroke-width="1.8" stroke-opacity="0.7" fill-opacity="0.7" style="opacity:var(--po,1)">Italie</text>
<text x="211.7" y="274.8" textLength="35.6" lengthAdjust="spacingAndGlyphs" font-size="9.0" font-weight="bold" fill="#fff" stroke="#fff" stroke-width="2.4" stroke-opacity="0.95" fill-opacity="0.95">Andorre-</text>
<text x="47.3" y="276.3" textLength="19.9" lengthAdjust="spacingAndGlyphs" font-size="7.8"  fill="#fff" stroke="#fff" stroke-width="1.8" stroke-opacity="0.7" fill-opacity="0.7" style="opacity:var(--po,1)">Galice</text>
<text x="211.7" y="283.2" textLength="34.8" lengthAdjust="spacingAndGlyphs" font-size="9.0" font-weight="bold" fill="#fff" stroke="#fff" stroke-width="2.4" stroke-opacity="0.95" fill-opacity="0.95">la-Vieille</text>
<text x="144.0" y="283.8" textLength="24.8" lengthAdjust="spacingAndGlyphs" font-size="7.8"  fill="#fff" stroke="#fff" stroke-width="1.8" stroke-opacity="0.7" fill-opacity="0.7" style="opacity:var(--po,1)">La Rioja</text>
<text x="358.4" y="287.5" textLength="18.4" lengthAdjust="spacingAndGlyphs" font-size="8.0" font-style="italic" fill="#fff" stroke="#fff" stroke-width="1.8" stroke-opacity="0.7" fill-opacity="0.7">Corse</text>
<text x="439.9" y="286.0" textLength="28.7" lengthAdjust="spacingAndGlyphs" font-size="7.8"  fill="#fff" stroke="#fff" stroke-width="1.8" stroke-opacity="0.7" fill-opacity="0.7" style="opacity:var(--po,1)">Abruzzes</text>
<text x="101.3" y="292.0" textLength="25.5" lengthAdjust="spacingAndGlyphs" font-size="7.8"  fill="#fff" stroke="#fff" stroke-width="1.8" stroke-opacity="0.7" fill-opacity="0.7" style="opacity:var(--po,1)">Castille-</text>
<text x="416.1" y="294.4" textLength="27.3" lengthAdjust="spacingAndGlyphs" font-size="9.0" font-weight="bold" fill="#fff" stroke="#fff" stroke-width="2.4" stroke-opacity="0.95" fill-opacity="0.95">Rome</text>
<text x="214.3" y="295.5" textLength="31.9" lengthAdjust="spacingAndGlyphs" font-size="7.8"  fill="#fff" stroke="#fff" stroke-width="1.8" stroke-opacity="0.7" fill-opacity="0.7" style="opacity:var(--po,1)">Catalogne</text>
<text x="102.0" y="299.5" textLength="24.8" lengthAdjust="spacingAndGlyphs" font-size="7.8"  fill="#fff" stroke="#fff" stroke-width="1.8" stroke-opacity="0.7" fill-opacity="0.7" style="opacity:var(--po,1)">et-León</text>
<text x="164.3" y="301.0" textLength="41.2" lengthAdjust="spacingAndGlyphs" font-size="9.0"  fill="#fff" stroke="#fff" stroke-width="2.4" stroke-opacity="0.95" fill-opacity="0.95">Saragosse</text>
<text x="458.1" y="299.3" textLength="19.6" lengthAdjust="spacingAndGlyphs" font-size="7.8"  fill="#fff" stroke="#fff" stroke-width="1.8" stroke-opacity="0.7" fill-opacity="0.7" style="opacity:var(--po,1)">Molise</text>
<text x="176.3" y="306.3" textLength="22.9" lengthAdjust="spacingAndGlyphs" font-size="7.8"  fill="#fff" stroke="#fff" stroke-width="1.8" stroke-opacity="0.7" fill-opacity="0.7" style="opacity:var(--po,1)">Aragon</text>
<text x="221.8" y="307.2" textLength="39.7" lengthAdjust="spacingAndGlyphs" font-size="9.0"  fill="#fff" stroke="#fff" stroke-width="2.4" stroke-opacity="0.95" fill-opacity="0.95">Barcelone</text>
<text x="266.3" y="3.3" textLength="47.2" lengthAdjust="spacingAndGlyphs" font-size="7.8"  fill="#9349a0" stroke="#9349a0" stroke-width="0.32" style="opacity:var(--po,1)">Septentrionale</text>
<text x="120.8" y="10.2" textLength="24.7" lengthAdjust="spacingAndGlyphs" font-size="7.8"  fill="#9349a0" stroke="#9349a0" stroke-width="0.32" style="opacity:var(--po,1)">Pays de</text>
<text x="123.0" y="16.8" textLength="19.5" lengthAdjust="spacingAndGlyphs" font-size="7.8"  fill="#9349a0" stroke="#9349a0" stroke-width="0.32" style="opacity:var(--po,1)">Galles</text>
<text x="262.2" y="12.0" textLength="56.6" lengthAdjust="spacingAndGlyphs" font-size="9.0" font-weight="bold" fill="#111" stroke="#111" stroke-width="0.2">Amsterdam</text>
<text x="363.0" y="11.7" textLength="33.0" lengthAdjust="spacingAndGlyphs" font-size="9.0"  fill="#222" stroke="#222" stroke-width="0.3">Hanovre</text>
<text x="432.0" y="7.8" textLength="28.6" lengthAdjust="spacingAndGlyphs" font-size="9.0" font-weight="bold" fill="#111" stroke="#111" stroke-width="0.2">Berlin</text>
<text x="496.5" y="10.7" textLength="21.5" lengthAdjust="spacingAndGlyphs" font-size="9.0"  fill="#222" stroke="#222" stroke-width="0.3">Poznań</text>
<text x="285.0" y="21.0" textLength="22.5" lengthAdjust="spacingAndGlyphs" font-size="7.8"  fill="#9349a0" stroke="#9349a0" stroke-width="0.32" style="opacity:var(--po,1)">Utrecht</text>
<text x="392.7" y="24.5" textLength="37.7" lengthAdjust="spacingAndGlyphs" font-size="7.8"  fill="#9349a0" stroke="#9349a0" stroke-width="0.32" style="opacity:var(--po,1)">Saxe-Anhalt</text>
<text x="471.3" y="18.9" textLength="22.0" lengthAdjust="spacingAndGlyphs" font-size="7.8"  fill="#9349a0" stroke="#9349a0" stroke-width="0.32" style="opacity:var(--po,1)">Lubusz</text>
<text x="323.3" y="30.0" textLength="32.2" lengthAdjust="spacingAndGlyphs" font-size="7.8"  fill="#9349a0" stroke="#9349a0" stroke-width="0.32" style="opacity:var(--po,1)">Rhénanie-</text>
<text x="326.3" y="37.5" textLength="25.5" lengthAdjust="spacingAndGlyphs" font-size="7.8"  fill="#9349a0" stroke="#9349a0" stroke-width="0.32" style="opacity:var(--po,1)">du-Nord-</text>
<text x="321.8" y="45.0" textLength="35.2" lengthAdjust="spacingAndGlyphs" font-size="7.8"  fill="#9349a0" stroke="#9349a0" stroke-width="0.32" style="opacity:var(--po,1)">Westphalie</text>
<text x="179.3" y="37.5" textLength="39.4" lengthAdjust="spacingAndGlyphs" font-size="9.0" font-weight="bold" fill="#111" stroke="#111" stroke-width="0.2">Londres</text>
<text x="249.0" y="37.5" textLength="46.8" lengthAdjust="spacingAndGlyphs" font-size="8.0" font-style="italic" fill="#333" stroke="#333" stroke-width="0.25">Zuid-Beveland</text>
<text x="367.5" y="49.5" textLength="47.7" lengthAdjust="spacingAndGlyphs" font-size="10.0" font-style="italic" fill="#8a4796" stroke="#8a4796" stroke-width="0.25" style="opacity:var(--po,1)">Allemagne</text>
<text x="438.6" y="51.0" textLength="28.3" lengthAdjust="spacingAndGlyphs" font-size="9.0"  fill="#222" stroke="#222" stroke-width="0.3">Dresde</text>
<text x="496.5" y="49.0" textLength="33.5" lengthAdjust="spacingAndGlyphs" font-size="9.0"  fill="#222" stroke="#222" stroke-width="0.3">Wrocław</text>
<text x="157.5" y="61.5" textLength="39.3" lengthAdjust="spacingAndGlyphs" font-size="8.0" font-style="italic" fill="#333" stroke="#333" stroke-width="0.25">Ile de Wight</text>
<text x="257.7" y="57.0" textLength="46.1" lengthAdjust="spacingAndGlyphs" font-size="9.0" font-weight="bold" fill="#111" stroke="#111" stroke-width="0.2">Bruxelles</text>
<text x="359.3" y="62.3" textLength="19.5" lengthAdjust="spacingAndGlyphs" font-size="7.8"  fill="#9349a0" stroke="#9349a0" stroke-width="0.32" style="opacity:var(--po,1)">Hesse</text>
<text x="390.0" y="59.3" textLength="27.8" lengthAdjust="spacingAndGlyphs" font-size="7.8"  fill="#9349a0" stroke="#9349a0" stroke-width="0.32" style="opacity:var(--po,1)">Thuringe</text>
<text x="235.5" y="74.3" textLength="30.0" lengthAdjust="spacingAndGlyphs" font-size="7.8"  fill="#9349a0" stroke="#9349a0" stroke-width="0.32" style="opacity:var(--po,1)">Hauts-de-</text>
<text x="240.8" y="81.8" textLength="21.0" lengthAdjust="spacingAndGlyphs" font-size="7.8"  fill="#9349a0" stroke="#9349a0" stroke-width="0.32" style="opacity:var(--po,1)">France</text>
<text x="447.4" y="78.6" textLength="34.6" lengthAdjust="spacingAndGlyphs" font-size="9.0" font-weight="bold" fill="#111" stroke="#111" stroke-width="0.2">Prague</text>
<text x="145.8" y="87.8" textLength="28.5" lengthAdjust="spacingAndGlyphs" font-size="7.8"  fill="#9349a0" stroke="#9349a0" stroke-width="0.32" style="opacity:var(--po,1)">Alderney</text>
<text x="282.0" y="92.3" textLength="61.5" lengthAdjust="spacingAndGlyphs" font-size="9.0" font-weight="bold" fill="#111" stroke="#111" stroke-width="0.2">Luxembourg</text>
<text x="381.4" y="95.6" textLength="44.6" lengthAdjust="spacingAndGlyphs" font-size="9.0"  fill="#222" stroke="#222" stroke-width="0.3">Nuremberg</text>
<text x="147.0" y="104.5" textLength="28.5" lengthAdjust="spacingAndGlyphs" font-size="10.0" font-style="italic" fill="#8a4796" stroke="#8a4796" stroke-width="0.25" style="opacity:var(--po,1)">Jersey</text>
<text x="189.8" y="106.3" textLength="34.5" lengthAdjust="spacingAndGlyphs" font-size="7.8"  fill="#9349a0" stroke="#9349a0" stroke-width="0.32" style="opacity:var(--po,1)">Normandie</text>
<text x="232.5" y="113.0" textLength="24.3" lengthAdjust="spacingAndGlyphs" font-size="9.0" font-weight="bold" fill="#111" stroke="#111" stroke-width="0.2">Paris</text>
<text x="231.0" y="119.8" textLength="41.3" lengthAdjust="spacingAndGlyphs" font-size="7.8"  fill="#9349a0" stroke="#9349a0" stroke-width="0.32" style="opacity:var(--po,1)">Ile-de-France</text>
<text x="351.0" y="115.2" textLength="36.0" lengthAdjust="spacingAndGlyphs" font-size="9.0"  fill="#222" stroke="#222" stroke-width="0.3">Stuttgart</text>
<text x="398.4" y="110.0" textLength="23.9" lengthAdjust="spacingAndGlyphs" font-size="7.8"  fill="#9349a0" stroke="#9349a0" stroke-width="0.32" style="opacity:var(--po,1)">Bavière</text>
<text x="133.5" y="128.8" textLength="29.3" lengthAdjust="spacingAndGlyphs" font-size="7.8"  fill="#9349a0" stroke="#9349a0" stroke-width="0.32" style="opacity:var(--po,1)">Bretagne</text>
<text x="297.0" y="122.8" textLength="31.5" lengthAdjust="spacingAndGlyphs" font-size="7.8"  fill="#9349a0" stroke="#9349a0" stroke-width="0.32" style="opacity:var(--po,1)">Grand Est</text>
<text x="398.4" y="132.6" textLength="28.3" lengthAdjust="spacingAndGlyphs" font-size="9.0"  fill="#222" stroke="#222" stroke-width="0.3">Munich</text>
<text x="433.6" y="128.8" textLength="47.8" lengthAdjust="spacingAndGlyphs" font-size="7.8"  fill="#9349a0" stroke="#9349a0" stroke-width="0.32" style="opacity:var(--po,1)">Haute-Autriche</text>
<text x="483.9" y="131.7" textLength="32.5" lengthAdjust="spacingAndGlyphs" font-size="9.0" font-weight="bold" fill="#111" stroke="#111" stroke-width="0.2">Vienne</text>
<text x="173.3" y="141.5" textLength="24.7" lengthAdjust="spacingAndGlyphs" font-size="7.8"  fill="#9349a0" stroke="#9349a0" stroke-width="0.32" style="opacity:var(--po,1)">Pays de</text>
<text x="174.0" y="149.0" textLength="23.7" lengthAdjust="spacingAndGlyphs" font-size="7.8"  fill="#9349a0" stroke="#9349a0" stroke-width="0.32" style="opacity:var(--po,1)">la Loire</text>
<text x="216.0" y="144.5" textLength="33.0" lengthAdjust="spacingAndGlyphs" font-size="7.8"  fill="#9349a0" stroke="#9349a0" stroke-width="0.32" style="opacity:var(--po,1)">Centre-Val</text>
<text x="219.8" y="152.0" textLength="25.5" lengthAdjust="spacingAndGlyphs" font-size="7.8"  fill="#9349a0" stroke="#9349a0" stroke-width="0.32" style="opacity:var(--po,1)">de Loire</text>
<text x="339.0" y="143.8" textLength="39.2" lengthAdjust="spacingAndGlyphs" font-size="7.8"  fill="#9349a0" stroke="#9349a0" stroke-width="0.32" style="opacity:var(--po,1)">Schaffhouse</text>
<text x="349.5" y="150.8" textLength="19.9" lengthAdjust="spacingAndGlyphs" font-size="7.8"  fill="#9349a0" stroke="#9349a0" stroke-width="0.32" style="opacity:var(--po,1)">Zurich</text>
<text x="428.0" y="150.8" textLength="31.4" lengthAdjust="spacingAndGlyphs" font-size="7.8"  fill="#9349a0" stroke="#9349a0" stroke-width="0.32" style="opacity:var(--po,1)">Salzbourg</text>
<text x="483.9" y="150.2" textLength="34.1" lengthAdjust="spacingAndGlyphs" font-size="7.8"  fill="#9349a0" stroke="#9349a0" stroke-width="0.32" style="opacity:var(--po,1)">Burgenland</text>
<text x="274.5" y="154.7" textLength="37.5" lengthAdjust="spacingAndGlyphs" font-size="7.8"  fill="#9349a0" stroke="#9349a0" stroke-width="0.32" style="opacity:var(--po,1)">Bourgogne-</text>
<text x="326.3" y="153.5" textLength="12.0" lengthAdjust="spacingAndGlyphs" font-size="7.8"  fill="#9349a0" stroke="#9349a0" stroke-width="0.32" style="opacity:var(--po,1)">Jura</text>
<text x="363.5" y="159.6" textLength="23.9" lengthAdjust="spacingAndGlyphs" font-size="9.0" font-weight="bold" fill="#111" stroke="#111" stroke-width="0.2">Vaduz</text>
<text x="404.7" y="157.1" textLength="14.4" lengthAdjust="spacingAndGlyphs" font-size="7.8"  fill="#9349a0" stroke="#9349a0" stroke-width="0.32" style="opacity:var(--po,1)">Tyrol</text>
<text x="424.8" y="158.1" textLength="35.8" lengthAdjust="spacingAndGlyphs" font-size="10.0" font-style="italic" fill="#8a4796" stroke="#8a4796" stroke-width="0.25" style="opacity:var(--po,1)">Autriche</text>
<text x="469.4" y="156.5" textLength="18.3" lengthAdjust="spacingAndGlyphs" font-size="7.8"  fill="#9349a0" stroke="#9349a0" stroke-width="0.32" style="opacity:var(--po,1)">Styrie</text>
<text x="279.8" y="161.8" textLength="27.0" lengthAdjust="spacingAndGlyphs" font-size="7.8"  fill="#9349a0" stroke="#9349a0" stroke-width="0.32" style="opacity:var(--po,1)">Franche-</text>
<text x="323.3" y="164.8" textLength="29.2" lengthAdjust="spacingAndGlyphs" font-size="9.0" font-weight="bold" fill="#111" stroke="#111" stroke-width="0.2">Berne</text>
<text x="283.5" y="169.3" textLength="20.3" lengthAdjust="spacingAndGlyphs" font-size="7.8"  fill="#9349a0" stroke="#9349a0" stroke-width="0.32" style="opacity:var(--po,1)">Comté</text>
<text x="312.8" y="172.3" textLength="15.7" lengthAdjust="spacingAndGlyphs" font-size="7.8"  fill="#9349a0" stroke="#9349a0" stroke-width="0.32" style="opacity:var(--po,1)">Vaud</text>
<text x="355.0" y="171.0" textLength="9.0" lengthAdjust="spacingAndGlyphs" font-size="7.8"  fill="#9349a0" stroke="#9349a0" stroke-width="0.32" style="opacity:var(--po,1)">Uri</text>
<text x="365.7" y="171.0" textLength="23.2" lengthAdjust="spacingAndGlyphs" font-size="7.8"  fill="#9349a0" stroke="#9349a0" stroke-width="0.32" style="opacity:var(--po,1)">Grisons</text>
<text x="439.9" y="169.7" textLength="28.9" lengthAdjust="spacingAndGlyphs" font-size="7.8"  fill="#9349a0" stroke="#9349a0" stroke-width="0.32" style="opacity:var(--po,1)">Carinthie</text>
<text x="220.5" y="174.5" textLength="30.0" lengthAdjust="spacingAndGlyphs" font-size="10.0" font-style="italic" fill="#8a4796" stroke="#8a4796" stroke-width="0.25" style="opacity:var(--po,1)">France</text>
<text x="301.5" y="183.5" textLength="24.8" lengthAdjust="spacingAndGlyphs" font-size="7.8"  fill="#9349a0" stroke="#9349a0" stroke-width="0.32" style="opacity:var(--po,1)">Genève</text>
<text x="331.5" y="183.5" textLength="18.8" lengthAdjust="spacingAndGlyphs" font-size="7.8"  fill="#9349a0" stroke="#9349a0" stroke-width="0.32" style="opacity:var(--po,1)">Valais</text>
<text x="352.0" y="179.8" textLength="17.4" lengthAdjust="spacingAndGlyphs" font-size="7.8"  fill="#9349a0" stroke="#9349a0" stroke-width="0.32" style="opacity:var(--po,1)">Tessin</text>
<text x="419.1" y="181.7" textLength="42.8" lengthAdjust="spacingAndGlyphs" font-size="7.8"  fill="#9349a0" stroke="#9349a0" stroke-width="0.32" style="opacity:var(--po,1)">Frioul-Vénétie</text>
<text x="426.7" y="189.2" textLength="25.8" lengthAdjust="spacingAndGlyphs" font-size="7.8"  fill="#9349a0" stroke="#9349a0" stroke-width="0.32" style="opacity:var(--po,1)">julienne</text>
<text x="476.0" y="195.6" textLength="35.0" lengthAdjust="spacingAndGlyphs" font-size="9.0" font-weight="bold" fill="#111" stroke="#111" stroke-width="0.2">Zagreb</text>
<text x="280.5" y="196.3" textLength="18.8" lengthAdjust="spacingAndGlyphs" font-size="9.0"  fill="#222" stroke="#222" stroke-width="0.3">Lyon</text>
<text x="318.0" y="197.0" textLength="36.0" lengthAdjust="spacingAndGlyphs" font-size="7.8"  fill="#9349a0" stroke="#9349a0" stroke-width="0.32" style="opacity:var(--po,1)">Val d'Aoste</text>
<text x="363.0" y="199.9" textLength="33.5" lengthAdjust="spacingAndGlyphs" font-size="7.8"  fill="#9349a0" stroke="#9349a0" stroke-width="0.32" style="opacity:var(--po,1)">Lombardie</text>
<text x="406.4" y="198.8" textLength="23.6" lengthAdjust="spacingAndGlyphs" font-size="7.8"  fill="#9349a0" stroke="#9349a0" stroke-width="0.32" style="opacity:var(--po,1)">Vénétie</text>
<text x="193.4" y="202.0" textLength="29.9" lengthAdjust="spacingAndGlyphs" font-size="7.8"  fill="#9349a0" stroke="#9349a0" stroke-width="0.32" style="opacity:var(--po,1)">Nouvelle-</text>
<text x="192.5" y="209.7" textLength="31.7" lengthAdjust="spacingAndGlyphs" font-size="7.8"  fill="#9349a0" stroke="#9349a0" stroke-width="0.32" style="opacity:var(--po,1)">Aquitaine</text>
<text x="269.0" y="203.5" textLength="32.0" lengthAdjust="spacingAndGlyphs" font-size="7.8"  fill="#9349a0" stroke="#9349a0" stroke-width="0.32" style="opacity:var(--po,1)">Auvergne-</text>
<text x="266.8" y="211.8" textLength="39.7" lengthAdjust="spacingAndGlyphs" font-size="7.8"  fill="#9349a0" stroke="#9349a0" stroke-width="0.32" style="opacity:var(--po,1)">Rhône-Alpes</text>
<text x="332.8" y="215.3" textLength="18.4" lengthAdjust="spacingAndGlyphs" font-size="9.0"  fill="#222" stroke="#222" stroke-width="0.3">Turin</text>
<text x="456.7" y="219.0" textLength="14.7" lengthAdjust="spacingAndGlyphs" font-size="8.0" font-style="italic" fill="#333" stroke="#333" stroke-width="0.25">Cres</text>
<text x="352.3" y="231.6" textLength="24.7" lengthAdjust="spacingAndGlyphs" font-size="9.0"  fill="#222" stroke="#222" stroke-width="0.3">Gênes</text>
<text x="419.6" y="235.6" textLength="17.5" lengthAdjust="spacingAndGlyphs" font-size="9.0" font-weight="bold" fill="#111" stroke="#111" stroke-width="0.2">Ville</text>
<text x="416.8" y="243.3" textLength="23.8" lengthAdjust="spacingAndGlyphs" font-size="9.0" font-weight="bold" fill="#111" stroke="#111" stroke-width="0.2">de S'-</text>
<text x="417.5" y="251.7" textLength="22.4" lengthAdjust="spacingAndGlyphs" font-size="9.0" font-weight="bold" fill="#111" stroke="#111" stroke-width="0.2">Marin</text>
<text x="229.3" y="250.5" textLength="29.2" lengthAdjust="spacingAndGlyphs" font-size="7.8"  fill="#9349a0" stroke="#9349a0" stroke-width="0.32" style="opacity:var(--po,1)">Occitanie</text>
<text x="318.5" y="248.7" textLength="37.5" lengthAdjust="spacingAndGlyphs" font-size="9.0" font-weight="bold" fill="#111" stroke="#111" stroke-width="0.2">Monaco</text>
<text x="428.0" y="258.0" textLength="26.6" lengthAdjust="spacingAndGlyphs" font-size="7.8"  fill="#9349a0" stroke="#9349a0" stroke-width="0.32" style="opacity:var(--po,1)">Marches</text>
<text x="499.4" y="262.2" textLength="16.6" lengthAdjust="spacingAndGlyphs" font-size="8.0" font-style="italic" fill="#333" stroke="#333" stroke-width="0.25">Hvar</text>
<text x="79.5" y="259.0" textLength="26.3" lengthAdjust="spacingAndGlyphs" font-size="7.8"  fill="#9349a0" stroke="#9349a0" stroke-width="0.32" style="opacity:var(--po,1)">Asturies</text>
<text x="111.0" y="262.8" textLength="30.8" lengthAdjust="spacingAndGlyphs" font-size="7.8"  fill="#9349a0" stroke="#9349a0" stroke-width="0.32" style="opacity:var(--po,1)">Cantabrie</text>
<text x="418.2" y="267.1" textLength="22.4" lengthAdjust="spacingAndGlyphs" font-size="7.8"  fill="#9349a0" stroke="#9349a0" stroke-width="0.32" style="opacity:var(--po,1)">Ombrie</text>
<text x="364.3" y="272.0" textLength="49.0" lengthAdjust="spacingAndGlyphs" font-size="8.0" font-style="italic" fill="#333" stroke="#333" stroke-width="0.25">Archipel toscan</text>
<text x="421.7" y="275.5" textLength="21.7" lengthAdjust="spacingAndGlyphs" font-size="10.0" font-style="italic" fill="#8a4796" stroke="#8a4796" stroke-width="0.25" style="opacity:var(--po,1)">Italie</text>
<text x="211.7" y="274.8" textLength="35.6" lengthAdjust="spacingAndGlyphs" font-size="9.0" font-weight="bold" fill="#111" stroke="#111" stroke-width="0.2">Andorre-</text>
<text x="47.3" y="276.3" textLength="19.9" lengthAdjust="spacingAndGlyphs" font-size="7.8"  fill="#9349a0" stroke="#9349a0" stroke-width="0.32" style="opacity:var(--po,1)">Galice</text>
<text x="211.7" y="283.2" textLength="34.8" lengthAdjust="spacingAndGlyphs" font-size="9.0" font-weight="bold" fill="#111" stroke="#111" stroke-width="0.2">la-Vieille</text>
<text x="144.0" y="283.8" textLength="24.8" lengthAdjust="spacingAndGlyphs" font-size="7.8"  fill="#9349a0" stroke="#9349a0" stroke-width="0.32" style="opacity:var(--po,1)">La Rioja</text>
<text x="358.4" y="287.5" textLength="18.4" lengthAdjust="spacingAndGlyphs" font-size="8.0" font-style="italic" fill="#333" stroke="#333" stroke-width="0.25">Corse</text>
<text x="439.9" y="286.0" textLength="28.7" lengthAdjust="spacingAndGlyphs" font-size="7.8"  fill="#9349a0" stroke="#9349a0" stroke-width="0.32" style="opacity:var(--po,1)">Abruzzes</text>
<text x="101.3" y="292.0" textLength="25.5" lengthAdjust="spacingAndGlyphs" font-size="7.8"  fill="#9349a0" stroke="#9349a0" stroke-width="0.32" style="opacity:var(--po,1)">Castille-</text>
<text x="416.1" y="294.4" textLength="27.3" lengthAdjust="spacingAndGlyphs" font-size="9.0" font-weight="bold" fill="#111" stroke="#111" stroke-width="0.2">Rome</text>
<text x="214.3" y="295.5" textLength="31.9" lengthAdjust="spacingAndGlyphs" font-size="7.8"  fill="#9349a0" stroke="#9349a0" stroke-width="0.32" style="opacity:var(--po,1)">Catalogne</text>
<text x="102.0" y="299.5" textLength="24.8" lengthAdjust="spacingAndGlyphs" font-size="7.8"  fill="#9349a0" stroke="#9349a0" stroke-width="0.32" style="opacity:var(--po,1)">et-León</text>
<text x="164.3" y="301.0" textLength="41.2" lengthAdjust="spacingAndGlyphs" font-size="9.0"  fill="#222" stroke="#222" stroke-width="0.3">Saragosse</text>
<text x="458.1" y="299.3" textLength="19.6" lengthAdjust="spacingAndGlyphs" font-size="7.8"  fill="#9349a0" stroke="#9349a0" stroke-width="0.32" style="opacity:var(--po,1)">Molise</text>
<text x="176.3" y="306.3" textLength="22.9" lengthAdjust="spacingAndGlyphs" font-size="7.8"  fill="#9349a0" stroke="#9349a0" stroke-width="0.32" style="opacity:var(--po,1)">Aragon</text>
<text x="221.8" y="307.2" textLength="39.7" lengthAdjust="spacingAndGlyphs" font-size="9.0"  fill="#222" stroke="#222" stroke-width="0.3">Barcelone</text>
</g>
</g></symbol></defs></svg>
<div id="desk"></div>
<div id="win">
  <div id="hdr">
    <!-- page entry -->
    <div class="entry" style="left:15px;top:5px;width:127px;height:59px;"></div>
    <div class="abs" style="left:16px;top:6px;width:48px;height:57px;background:#fbfbfb;border-radius:5px 0 0 5px;"></div>
    <div class="abs" style="left:64px;top:6px;width:1px;height:57px;background:#9a9a9a;"></div>
    <div class="abs" style="left:65px;top:6px;width:76px;height:57px;background:#f3f3f3;border-radius:0 5px 5px 0;"></div>
    <svg class="abs" style="left:0;top:0;z-index:2" width="130" height="70" viewBox="5 5 130 70"><path d="M38.4,30.7 H40.8 V47.8 H38.4 V33.9 L34.4,36 L33.6,34.1 Z" fill="#2e2e2e"/><path d="M118.2,30.8 H120.6 V48 H118.2 V34 L114.4,36.1 L113.6,34.2 Z" fill="#7d7d7d"/></svg>
    <div class="abs" style="left:77px;top:19px;font-size:25px;color:#7d7d7d;">of</div>
    <!-- nav -->
    <div class="btn" style="left:167px;top:6px;width:109px;height:56px;"></div>
    <div class="btn" style="left:300px;top:6px;width:56px;height:56px;"></div>
    <div class="btn" style="left:380px;top:6px;width:56px;height:56px;"></div>
    <!-- title -->
    <div class="abs" style="left:522px;top:18px;font-size:25.5px;font-weight:bold;letter-spacing:0.85px;color:#eae6dd;text-shadow:0 0 2px #1a1917,0 1px 1px #111;">xleaflet.pdf</div>
    <!-- zoom -->
    <div class="entry" style="left:750px;top:12px;width:156px;height:44px;"></div>
    <div class="abs" style="left:762px;top:19.5px;font-size:24.6px;letter-spacing:-0.45px;color:#3c3c3c;">96.45%</div>
    <div class="btn" style="left:931px;top:6px;width:56px;height:56px;"></div>
    <div class="btn" style="left:1000px;top:6px;width:56px;height:56px;"></div>

    <svg class="abs" style="left:0;top:0" width="1190" height="70" viewBox="5 5 1190 70">
      <g fill="none" stroke="#9a9893" stroke-width="3" stroke-linecap="round" stroke-linejoin="round">
        <polyline points="204,31.5 194.5,40 204,48.5"/>
        <polyline points="249.5,31.5 259,40 249.5,48.5"/>
      </g>
      <g stroke="#1d1c1a" stroke-opacity="0.6" fill="none">
        <circle cx="330.6" cy="37.5" r="7.5" stroke-width="5.5"/>
        <line x1="336.5" y1="43.5" x2="344" y2="50.5" stroke-width="4.5" stroke-linecap="round"/>
      </g>
      <g stroke="#ece9e1" fill="none">
        <circle cx="330.6" cy="37.5" r="7.5" stroke-width="3.8"/>
        <line x1="336.5" y1="43.5" x2="344" y2="50.5" stroke-width="3" stroke-linecap="round"/>
      </g>
      <!-- annotations icon -->
      <g>
        <rect x="403" y="28" width="22" height="25.5" rx="3" fill="#ece9e1" stroke="#1d1c1a" stroke-opacity="0.6" stroke-width="1"/>
        <rect x="407" y="32" width="14" height="18" fill="#24231f"/>
        <rect x="407" y="26.5" width="14" height="6" fill="#24231f"/>
        <rect x="408.4" y="26.8" width="1.5" height="6" fill="#ece9e1"/>
        <rect x="411.8" y="26.8" width="1.5" height="6" fill="#ece9e1"/>
        <rect x="415.1" y="26.8" width="1.5" height="6" fill="#ece9e1"/>
        <rect x="418.5" y="26.8" width="1.5" height="6" fill="#ece9e1"/>
        <rect x="408.3" y="36.7" width="11.5" height="1.6" fill="#ece9e1"/>
        <rect x="408.3" y="39.8" width="9.9" height="1.6" fill="#ece9e1"/>
        <rect x="408.3" y="43.2" width="11.5" height="1.6" fill="#ece9e1"/>
        <rect x="408.3" y="46.6" width="6.7" height="1.6" fill="#ece9e1"/>
      </g>
      <!-- zoom chevron -->
      <polyline points="877,33.5 886.5,43.5 896,33.5" fill="none" stroke="#3c3c3c" stroke-width="3.2" stroke-linecap="round" stroke-linejoin="round"/>
      <!-- doc wrench -->
      <g fill="none" stroke-linejoin="round" stroke-linecap="butt">
        <path d="M971.5,49.5 V36.5 L965,30 H955 V51.5 H961.5" stroke="#1d1c1a" stroke-opacity="0.55" stroke-width="5.4"/>
        <circle cx="962.8" cy="44.2" r="4.6" fill="#1d1c1a" fill-opacity="0.55" stroke="none"/>
        <line x1="964.5" y1="46" x2="970.3" y2="52.3" stroke="#1d1c1a" stroke-opacity="0.55" stroke-width="5" stroke-linecap="round"/>
        <path d="M971.5,49.5 V36.5 L965,30 H955 V51.5 H961.5" stroke="#ece9e1" stroke-width="3.8"/>
        <circle cx="962.8" cy="44.2" r="4" fill="#ece9e1" stroke="none"/>
        <circle cx="963.6" cy="41.3" r="1.9" fill="#47453f" stroke="none"/>
        <line x1="964.5" y1="46" x2="970.3" y2="52.3" stroke="#ece9e1" stroke-width="3.5" stroke-linecap="round"/>
      </g>
      <!-- hamburger -->
      <g fill="#ece9e1" stroke="#1d1c1a" stroke-opacity="0.7" stroke-width="1">
        <rect x="1025" y="31.8" width="17" height="3.3"/>
        <rect x="1025" y="38.2" width="17" height="3.4"/>
        <rect x="1025" y="45" width="17" height="3.3"/>
      </g>
      <!-- separator -->
      <rect x="1073.5" y="15" width="1.2" height="50" fill="#33322d"/>
      <rect x="1074.7" y="15" width="1.2" height="50" fill="#5e5b53"/>
      <defs>
        <linearGradient id="gb" x1="0" y1="0" x2="0" y2="1"><stop offset="0" stop-color="#9a9893"/><stop offset="1" stop-color="#6d6b66"/></linearGradient>
        <linearGradient id="go" x1="0" y1="0" x2="0" y2="1"><stop offset="0" stop-color="#f48a60"/><stop offset="1" stop-color="#df4f1f"/></linearGradient>
      </defs>
      <circle cx="1100" cy="39.7" r="13.6" fill="url(#gb)" stroke="#2c2b28" stroke-width="1.6"/>
      <circle cx="1133" cy="39.7" r="13.6" fill="url(#gb)" stroke="#2c2b28" stroke-width="1.6"/>
      <circle cx="1166.4" cy="39.7" r="13.6" fill="url(#go)" stroke="#2c2b28" stroke-width="1.6"/>
      <rect x="1093" y="39.5" width="14" height="2" fill="#3a3a37"/>
      <rect x="1127.3" y="34" width="12" height="12" fill="none" stroke="#33322f" stroke-width="1.8"/>
      <g stroke="#1f1c16" stroke-width="2"><line x1="1161.5" y1="34.8" x2="1171.3" y2="44.6"/><line x1="1171.3" y1="34.8" x2="1161.5" y2="44.6"/></g>
    </svg>
  </div>
  <div id="side">
    <div class="abs" style="left:25px;top:20px;font-size:24px;color:#3c3c3c;">Thu…</div>
    <svg class="abs" style="left:0;top:-1px" width="220" height="80" viewBox="5 75 220 80">
      <polyline points="123.5,104.5 131,112.5 138.5,104.5" fill="none" stroke="#3c3c3c" stroke-width="3" stroke-linecap="round" stroke-linejoin="round"/>
      <g stroke="#3c3c3c" stroke-width="1.7"><line x1="185.5" y1="103.5" x2="195.3" y2="113.3"/><line x1="195.3" y1="103.5" x2="185.5" y2="113.3"/></g>
    </svg>
    <div class="abs" style="left:0;top:68px;width:220px;height:1px;background:#c3c2be"></div>
    <div class="abs" style="left:0;top:69px;width:220px;height:2px;background:#fafafa"></div>
    <div class="abs" style="left:0;top:71px;width:220px;height:1px;background:#c3c2be"></div>
  </div>
  <div id="thumbs">
    <div class="abs" style="left:10px;top:10.5px;width:190px;height:472px;background:linear-gradient(180deg,#f07b47 0%,#ec7340 80%,#e3652f 100%);border:1px solid #cf541d;border-radius:7px;box-shadow:inset 0 1px 0 #f79a6d,0 1px 1px rgba(0,0,0,0.15)"></div>
    <div class="abs" style="left:20.2px;top:20.3px;width:169.5px;height:417.4px;background:#000"></div>
    <svg class="abs" style="left:0;top:0" width="220" height="500" viewBox="5 148 220 500"><path d="M114.6,595.3 L117.3,595.3 L113.6,613.8 L110.9,613.8 L113.8,599.2 L109.9,601.2 L109.6,599.2 Z" fill="#fbf3ea"/></svg>
  </div>
  <div id="divider"></div>
  <div id="content"></div>
  <div id="page" class="pg">
<div class="abs ttl">Using Voilà with the C++ kernel and interactive widgets</div>
<div class="prompt" style="top:55px;">In [1]:</div>
<div class="code" style="top:51px;height:139px;"><pre><span class="c">#include &lt;iostream&gt;</span>
<span class="c">#include &lt;string&gt;</span>

<span class="c">#include "xwidgets/xoutput.hpp"</span>

<span class="c">#include "xleaflet/xmap.hpp"</span>
<span class="c">#include "xleaflet/xdraw_control.hpp"</span>
<span class="c">#include "xleaflet/xbasemaps.hpp"</span>

<span class="k">namespace</span> nl <span class="o">=</span> nlohmann<span class="p">;</span></pre></div>
<div class="prompt" style="top:202.5px;">In [2]:</div>
<div class="code" style="top:198.5px;height:137px;"><pre><span class="c">// Create map widget</span>
<span class="k">auto</span> water_color <span class="o">=</span> xlf<span class="o">::</span>basemap<span class="p">({</span><span class="s">"OpenStreetMap"</span><span class="p">,</span> <span class="s">"France"</span><span class="p">});</span>

<span class="k">auto</span> map <span class="o">=</span> xlf<span class="o">::</span>map<span class="o">::</span>initialize<span class="p">()</span>
    <span class="p">.</span>layers<span class="p">({</span>water_color<span class="p">})</span>
    <span class="p">.</span>center<span class="p">({</span><span class="n">47</span><span class="p">,</span> <span class="n">363</span><span class="p">})</span>
    <span class="p">.</span>zoom<span class="p">(</span><span class="n">5</span><span class="p">)</span>
    <span class="p">.</span>finalize<span class="p">();</span>

map</pre></div>
<div class="prompt" style="top:344px;">Out[2]:</div>
<div class="map"><svg width="511" height="321" style="position:absolute;left:0;top:0"><use href="#mapsym"/></svg><div class="lbar" style="top:8px;height:51px;"><svg width="25" height="51" viewBox="0 0 25 51" style="position:absolute;left:0;top:0"><g fill="#111"><rect x="8.6" y="10.5" width="9.4" height="2.0"/><rect x="12.3" y="6.8" width="2.0" height="9.4"/><rect x="8.6" y="35.6" width="9.4" height="2.0"/></g><rect x="0" y="25" width="25.2" height="1" fill="#ccc"/></svg></div>
<div class="lbar" style="top:68.5px;height:51px;"><svg width="25" height="51" viewBox="0 0 25 51" style="position:absolute;left:0;top:0"><g fill="#111"><rect x="8.6" y="10.5" width="9.4" height="2.0"/><rect x="12.3" y="6.8" width="2.0" height="9.4"/><rect x="8.6" y="35.6" width="9.4" height="2.0"/></g><rect x="0" y="25" width="25.2" height="1" fill="#ccc"/></svg></div>
<div class="lbar" style="top:129.4px;height:100px;">
<svg width="25" height="100" viewBox="0 0 25 100" style="position:absolute;left:0;top:0">
<line x1="7.5" y1="17.5" x2="17" y2="8" stroke="#464646" stroke-width="1.3"/><circle cx="7.5" cy="17.5" r="1.4" fill="#464646"/><circle cx="17" cy="8" r="1.4" fill="#464646"/>
<line x1="0" y1="24.9" x2="25" y2="24.9" stroke="#ccc" stroke-width="1"/>
<polygon points="12.5,32.5 17.4,36 15.6,41.7 9.4,41.7 7.6,36" fill="#464646"/>
<line x1="0" y1="49.8" x2="25" y2="49.8" stroke="#ccc" stroke-width="1"/>
<rect x="8.2" y="57.5" width="8.6" height="8.6" fill="#464646"/>
<line x1="0" y1="74.6" x2="25" y2="74.6" stroke="#ccc" stroke-width="1"/>
<circle cx="12.5" cy="87" r="4.6" fill="#464646"/>
</svg></div>
<div class="lbar" style="top:241.2px;height:50px;background:#bdbdbd;">
<svg width="25" height="50" viewBox="0 0 25 50" style="position:absolute;left:0;top:0">
<path d="M13,7.5 H9.2 a1.5,1.5 0 0 0 -1.5,1.5 V16 a1.5,1.5 0 0 0 1.5,1.5 H15.5 a1.5,1.5 0 0 0 1.5,-1.5 V12" fill="none" stroke="#3d3d3d" stroke-width="1.3"/>
<path d="M11,14 L12,11.5 L17,6.5 L18.5,8 L13.5,13 Z" fill="#3d3d3d"/>
<line x1="0" y1="24.7" x2="25" y2="24.7" stroke="#a9a9a9" stroke-width="1"/>
<rect x="8.5" y="31.5" width="8" height="10" fill="none" stroke="#555" stroke-width="1.1"/>
<rect x="7.4" y="30" width="10.2" height="1.4" fill="#555"/><rect x="10.7" y="28.6" width="3.6" height="1.4" fill="#555"/>
<line x1="11" y1="33" x2="11" y2="40" stroke="#555" stroke-width="0.8"/><line x1="14" y1="33" x2="14" y2="40" stroke="#555" stroke-width="0.8"/>
</svg></div>
<div class="attr"><span style="color:#0078a8">Leaflet</span> | © Openstreetmap France | © <span style="color:#0078a8">OpenStreetMap</span></div></div>
<div class="prompt" style="top:679.5px;">In [3]:</div>
<div class="code" style="top:677px;height:48px;"><pre><span class="c">// Create output widget to log draw events</span>
xw<span class="o">::</span>output out<span class="p">;</span>
out</pre></div>
<div class="prompt" style="top:732px;">Out[3]:</div>
<div class="prompt" style="top:764px;">In [4]:</div>
<div class="code" style="top:759.5px;height:482.5px;"><pre><span class="c">// Options for the draw control</span>
nl<span class="o">::</span>json polyline_options <span class="o">=</span> <span class="p">{</span>
    <span class="p">{</span><span class="s">"shapeOptions"</span><span class="p">,</span> <span class="p">{</span>
        <span class="p">{</span><span class="s">"color"</span><span class="p">,</span> <span class="s">"#6bc2e5"</span><span class="p">},</span>
        <span class="p">{</span><span class="s">"weight"</span><span class="p">,</span> <span class="n">8</span><span class="p">},</span>
        <span class="p">{</span><span class="s">"opacity"</span><span class="p">,</span> <span class="n">1.0</span><span class="p">}</span>
    <span class="p">}}</span>
<span class="p">};</span>

nl<span class="o">::</span>json polygon_options <span class="o">=</span> <span class="p">{</span>
    <span class="p">{</span><span class="s">"shapeOptions"</span><span class="p">,</span> <span class="p">{</span>
        <span class="p">{</span><span class="s">"fillColor"</span><span class="p">,</span> <span class="s">"#6be5c3"</span><span class="p">},</span>
        <span class="p">{</span><span class="s">"color"</span><span class="p">,</span> <span class="s">"#6be5c3"</span><span class="p">},</span>
        <span class="p">{</span><span class="s">"fillOpacity"</span><span class="p">,</span> <span class="n">1.0</span><span class="p">}</span>
    <span class="p">}},</span>
    <span class="p">{</span><span class="s">"drawError"</span><span class="p">,</span> <span class="p">{</span>
        <span class="p">{</span><span class="s">"color"</span><span class="p">,</span> <span class="s">"#dd253b"</span><span class="p">},</span>
        <span class="p">{</span><span class="s">"message"</span><span class="p">,</span> <span class="s">"Oups!"</span><span class="p">}</span>
    <span class="p">}},</span>
    <span class="p">{</span><span class="s">"allowIntersection"</span><span class="p">,</span> false<span class="p">}</span>
<span class="p">};</span>

nl<span class="o">::</span>json circle_options <span class="o">=</span> <span class="p">{</span>
    <span class="p">{</span><span class="s">"shapeOptions"</span><span class="p">,</span> <span class="p">{</span>
        <span class="p">{</span><span class="s">"fillColor"</span><span class="p">,</span> <span class="s">"#efed69"</span><span class="p">},</span>
        <span class="p">{</span><span class="s">"fillOpacity"</span><span class="p">,</span> <span class="n">1.0</span><span class="p">},</span>
        <span class="p">{</span><span class="s">"color"</span><span class="p">,</span> <span class="s">"#efed69"</span><span class="p">}</span>
    <span class="p">}}</span>
<span class="p">};</span>

nl<span class="o">::</span>json rectangle_options <span class="o">=</span> <span class="p">{</span>
    <span class="p">{</span><span class="s">"shapeOptions"</span><span class="p">,</span> <span class="p">{</span>
        <span class="p">{</span><span class="s">"fillColor"</span><span class="p">,</span> <span class="s">"#fca45d"</span><span class="p">},</span>
        <span class="p">{</span><span class="s">"fillOpacity"</span><span class="p">,</span> <span class="n">1.0</span><span class="p">},</span>
        <span class="p">{</span><span class="s">"color"</span><span class="p">,</span> <span class="s">"#fca45d"</span><span class="p">}</span>
    <span class="p">}}</span>
<span class="p">};</span></pre></div>
<div class="prompt" style="top:1256.4px;">In [5]:</div>
<div class="code" style="top:1252.4px;height:122px;"><pre><span class="c">// Log draw action</span>
<span class="k">void</span> print_draw_event<span class="p">(</span>std<span class="o">::</span>string action<span class="p">,</span> nl<span class="o">::</span>json geo_json<span class="p">)</span>
<span class="p">{</span>
    <span class="c">// Capturing the stdout with the output widget</span>
    <span class="k">auto</span> guard <span class="o">=</span> out<span class="p">.</span>guard<span class="p">();</span>
    std<span class="o">::</span>cout <span class="o">&lt;&lt;</span> action <span class="o">&lt;&lt;</span> <span class="s">" a "</span>
        <span class="o">&lt;&lt;</span> geo_json<span class="p">[</span><span class="s">"geometry"</span><span class="p">][</span><span class="s">"type"</span><span class="p">]</span>
        <span class="o">&lt;&lt;</span> std<span class="o">::</span>endl<span class="p">;</span>
<span class="p">}</span></pre></div>
<div class="prompt" style="top:1388.6px;">In [6]:</div>
<div class="code" style="top:1384.6px;height:134px;"><pre><span class="c">// Add the draw control and event logger</span>
<span class="k">auto</span> draw_control <span class="o">=</span> xlf<span class="o">::</span>draw_control<span class="o">::</span>initialize<span class="p">()</span>
    <span class="p">.</span>polyline<span class="p">(</span>polyline_options<span class="p">)</span>
    <span class="p">.</span>polygon<span class="p">(</span>polygon_options<span class="p">)</span>
    <span class="p">.</span>circle<span class="p">(</span>circle_options<span class="p">)</span>
    <span class="p">.</span>rectangle<span class="p">(</span>rectangle_options<span class="p">)</span>
    <span class="p">.</span>finalize<span class="p">();</span>

draw_control<span class="p">.</span>on_draw<span class="p">(</span>print_draw_event<span class="p">);</span>
map<span class="p">.</span>add_control<span class="p">(</span>draw_control<span class="p">);</span></pre></div>
<div class="prompt" style="top:1532.4px;">In [ ]:</div>
<div class="code" style="top:1528.4px;height:23px;"><pre></pre></div>
  </div>
  <div id="thumb" class="pg">
<div class="abs ttl">Using Voilà with the C++ kernel and interactive widgets</div>
<div class="prompt" style="top:55px;">In [1]:</div>
<div class="code" style="top:51px;height:139px;"><pre><span class="c">#include &lt;iostream&gt;</span>
<span class="c">#include &lt;string&gt;</span>

<span class="c">#include "xwidgets/xoutput.hpp"</span>

<span class="c">#include "xleaflet/xmap.hpp"</span>
<span class="c">#include "xleaflet/xdraw_control.hpp"</span>
<span class="c">#include "xleaflet/xbasemaps.hpp"</span>

<span class="k">namespace</span> nl <span class="o">=</span> nlohmann<span class="p">;</span></pre></div>
<div class="prompt" style="top:202.5px;">In [2]:</div>
<div class="code" style="top:198.5px;height:137px;"><pre><span class="c">// Create map widget</span>
<span class="k">auto</span> water_color <span class="o">=</span> xlf<span class="o">::</span>basemap<span class="p">({</span><span class="s">"OpenStreetMap"</span><span class="p">,</span> <span class="s">"France"</span><span class="p">});</span>

<span class="k">auto</span> map <span class="o">=</span> xlf<span class="o">::</span>map<span class="o">::</span>initialize<span class="p">()</span>
    <span class="p">.</span>layers<span class="p">({</span>water_color<span class="p">})</span>
    <span class="p">.</span>center<span class="p">({</span><span class="n">47</span><span class="p">,</span> <span class="n">363</span><span class="p">})</span>
    <span class="p">.</span>zoom<span class="p">(</span><span class="n">5</span><span class="p">)</span>
    <span class="p">.</span>finalize<span class="p">();</span>

map</pre></div>
<div class="prompt" style="top:344px;">Out[2]:</div>
<div class="map"><svg width="511" height="321" style="position:absolute;left:0;top:0"><use href="#mapsym"/></svg><div class="lbar" style="top:8px;height:51px;"><svg width="25" height="51" viewBox="0 0 25 51" style="position:absolute;left:0;top:0"><g fill="#111"><rect x="8.6" y="10.5" width="9.4" height="2.0"/><rect x="12.3" y="6.8" width="2.0" height="9.4"/><rect x="8.6" y="35.6" width="9.4" height="2.0"/></g><rect x="0" y="25" width="25.2" height="1" fill="#ccc"/></svg></div>
<div class="lbar" style="top:68.5px;height:51px;"><svg width="25" height="51" viewBox="0 0 25 51" style="position:absolute;left:0;top:0"><g fill="#111"><rect x="8.6" y="10.5" width="9.4" height="2.0"/><rect x="12.3" y="6.8" width="2.0" height="9.4"/><rect x="8.6" y="35.6" width="9.4" height="2.0"/></g><rect x="0" y="25" width="25.2" height="1" fill="#ccc"/></svg></div>
<div class="lbar" style="top:129.4px;height:100px;">
<svg width="25" height="100" viewBox="0 0 25 100" style="position:absolute;left:0;top:0">
<line x1="7.5" y1="17.5" x2="17" y2="8" stroke="#464646" stroke-width="1.3"/><circle cx="7.5" cy="17.5" r="1.4" fill="#464646"/><circle cx="17" cy="8" r="1.4" fill="#464646"/>
<line x1="0" y1="24.9" x2="25" y2="24.9" stroke="#ccc" stroke-width="1"/>
<polygon points="12.5,32.5 17.4,36 15.6,41.7 9.4,41.7 7.6,36" fill="#464646"/>
<line x1="0" y1="49.8" x2="25" y2="49.8" stroke="#ccc" stroke-width="1"/>
<rect x="8.2" y="57.5" width="8.6" height="8.6" fill="#464646"/>
<line x1="0" y1="74.6" x2="25" y2="74.6" stroke="#ccc" stroke-width="1"/>
<circle cx="12.5" cy="87" r="4.6" fill="#464646"/>
</svg></div>
<div class="lbar" style="top:241.2px;height:50px;background:#bdbdbd;">
<svg width="25" height="50" viewBox="0 0 25 50" style="position:absolute;left:0;top:0">
<path d="M13,7.5 H9.2 a1.5,1.5 0 0 0 -1.5,1.5 V16 a1.5,1.5 0 0 0 1.5,1.5 H15.5 a1.5,1.5 0 0 0 1.5,-1.5 V12" fill="none" stroke="#3d3d3d" stroke-width="1.3"/>
<path d="M11,14 L12,11.5 L17,6.5 L18.5,8 L13.5,13 Z" fill="#3d3d3d"/>
<line x1="0" y1="24.7" x2="25" y2="24.7" stroke="#a9a9a9" stroke-width="1"/>
<rect x="8.5" y="31.5" width="8" height="10" fill="none" stroke="#555" stroke-width="1.1"/>
<rect x="7.4" y="30" width="10.2" height="1.4" fill="#555"/><rect x="10.7" y="28.6" width="3.6" height="1.4" fill="#555"/>
<line x1="11" y1="33" x2="11" y2="40" stroke="#555" stroke-width="0.8"/><line x1="14" y1="33" x2="14" y2="40" stroke="#555" stroke-width="0.8"/>
</svg></div>
<div class="attr"><span style="color:#0078a8">Leaflet</span> | © Openstreetmap France | © <span style="color:#0078a8">OpenStreetMap</span></div></div>
<div class="prompt" style="top:679.5px;">In [3]:</div>
<div class="code" style="top:677px;height:48px;"><pre><span class="c">// Create output widget to log draw events</span>
xw<span class="o">::</span>output out<span class="p">;</span>
out</pre></div>
<div class="prompt" style="top:732px;">Out[3]:</div>
<div class="prompt" style="top:764px;">In [4]:</div>
<div class="code" style="top:759.5px;height:482.5px;"><pre><span class="c">// Options for the draw control</span>
nl<span class="o">::</span>json polyline_options <span class="o">=</span> <span class="p">{</span>
    <span class="p">{</span><span class="s">"shapeOptions"</span><span class="p">,</span> <span class="p">{</span>
        <span class="p">{</span><span class="s">"color"</span><span class="p">,</span> <span class="s">"#6bc2e5"</span><span class="p">},</span>
        <span class="p">{</span><span class="s">"weight"</span><span class="p">,</span> <span class="n">8</span><span class="p">},</span>
        <span class="p">{</span><span class="s">"opacity"</span><span class="p">,</span> <span class="n">1.0</span><span class="p">}</span>
    <span class="p">}}</span>
<span class="p">};</span>

nl<span class="o">::</span>json polygon_options <span class="o">=</span> <span class="p">{</span>
    <span class="p">{</span><span class="s">"shapeOptions"</span><span class="p">,</span> <span class="p">{</span>
        <span class="p">{</span><span class="s">"fillColor"</span><span class="p">,</span> <span class="s">"#6be5c3"</span><span class="p">},</span>
        <span class="p">{</span><span class="s">"color"</span><span class="p">,</span> <span class="s">"#6be5c3"</span><span class="p">},</span>
        <span class="p">{</span><span class="s">"fillOpacity"</span><span class="p">,</span> <span class="n">1.0</span><span class="p">}</span>
    <span class="p">}},</span>
    <span class="p">{</span><span class="s">"drawError"</span><span class="p">,</span> <span class="p">{</span>
        <span class="p">{</span><span class="s">"color"</span><span class="p">,</span> <span class="s">"#dd253b"</span><span class="p">},</span>
        <span class="p">{</span><span class="s">"message"</span><span class="p">,</span> <span class="s">"Oups!"</span><span class="p">}</span>
    <span class="p">}},</span>
    <span class="p">{</span><span class="s">"allowIntersection"</span><span class="p">,</span> false<span class="p">}</span>
<span class="p">};</span>

nl<span class="o">::</span>json circle_options <span class="o">=</span> <span class="p">{</span>
    <span class="p">{</span><span class="s">"shapeOptions"</span><span class="p">,</span> <span class="p">{</span>
        <span class="p">{</span><span class="s">"fillColor"</span><span class="p">,</span> <span class="s">"#efed69"</span><span class="p">},</span>
        <span class="p">{</span><span class="s">"fillOpacity"</span><span class="p">,</span> <span class="n">1.0</span><span class="p">},</span>
        <span class="p">{</span><span class="s">"color"</span><span class="p">,</span> <span class="s">"#efed69"</span><span class="p">}</span>
    <span class="p">}}</span>
<span class="p">};</span>

nl<span class="o">::</span>json rectangle_options <span class="o">=</span> <span class="p">{</span>
    <span class="p">{</span><span class="s">"shapeOptions"</span><span class="p">,</span> <span class="p">{</span>
        <span class="p">{</span><span class="s">"fillColor"</span><span class="p">,</span> <span class="s">"#fca45d"</span><span class="p">},</span>
        <span class="p">{</span><span class="s">"fillOpacity"</span><span class="p">,</span> <span class="n">1.0</span><span class="p">},</span>
        <span class="p">{</span><span class="s">"color"</span><span class="p">,</span> <span class="s">"#fca45d"</span><span class="p">}</span>
    <span class="p">}}</span>
<span class="p">};</span></pre></div>
<div class="prompt" style="top:1256.4px;">In [5]:</div>
<div class="code" style="top:1252.4px;height:122px;"><pre><span class="c">// Log draw action</span>
<span class="k">void</span> print_draw_event<span class="p">(</span>std<span class="o">::</span>string action<span class="p">,</span> nl<span class="o">::</span>json geo_json<span class="p">)</span>
<span class="p">{</span>
    <span class="c">// Capturing the stdout with the output widget</span>
    <span class="k">auto</span> guard <span class="o">=</span> out<span class="p">.</span>guard<span class="p">();</span>
    std<span class="o">::</span>cout <span class="o">&lt;&lt;</span> action <span class="o">&lt;&lt;</span> <span class="s">" a "</span>
        <span class="o">&lt;&lt;</span> geo_json<span class="p">[</span><span class="s">"geometry"</span><span class="p">][</span><span class="s">"type"</span><span class="p">]</span>
        <span class="o">&lt;&lt;</span> std<span class="o">::</span>endl<span class="p">;</span>
<span class="p">}</span></pre></div>
<div class="prompt" style="top:1388.6px;">In [6]:</div>
<div class="code" style="top:1384.6px;height:134px;"><pre><span class="c">// Add the draw control and event logger</span>
<span class="k">auto</span> draw_control <span class="o">=</span> xlf<span class="o">::</span>draw_control<span class="o">::</span>initialize<span class="p">()</span>
    <span class="p">.</span>polyline<span class="p">(</span>polyline_options<span class="p">)</span>
    <span class="p">.</span>polygon<span class="p">(</span>polygon_options<span class="p">)</span>
    <span class="p">.</span>circle<span class="p">(</span>circle_options<span class="p">)</span>
    <span class="p">.</span>rectangle<span class="p">(</span>rectangle_options<span class="p">)</span>
    <span class="p">.</span>finalize<span class="p">();</span>

draw_control<span class="p">.</span>on_draw<span class="p">(</span>print_draw_event<span class="p">);</span>
map<span class="p">.</span>add_control<span class="p">(</span>draw_control<span class="p">);</span></pre></div>
<div class="prompt" style="top:1532.4px;">In [ ]:</div>
<div class="code" style="top:1528.4px;height:23px;"><pre></pre></div>
  </div>
</div>
</body></html>
